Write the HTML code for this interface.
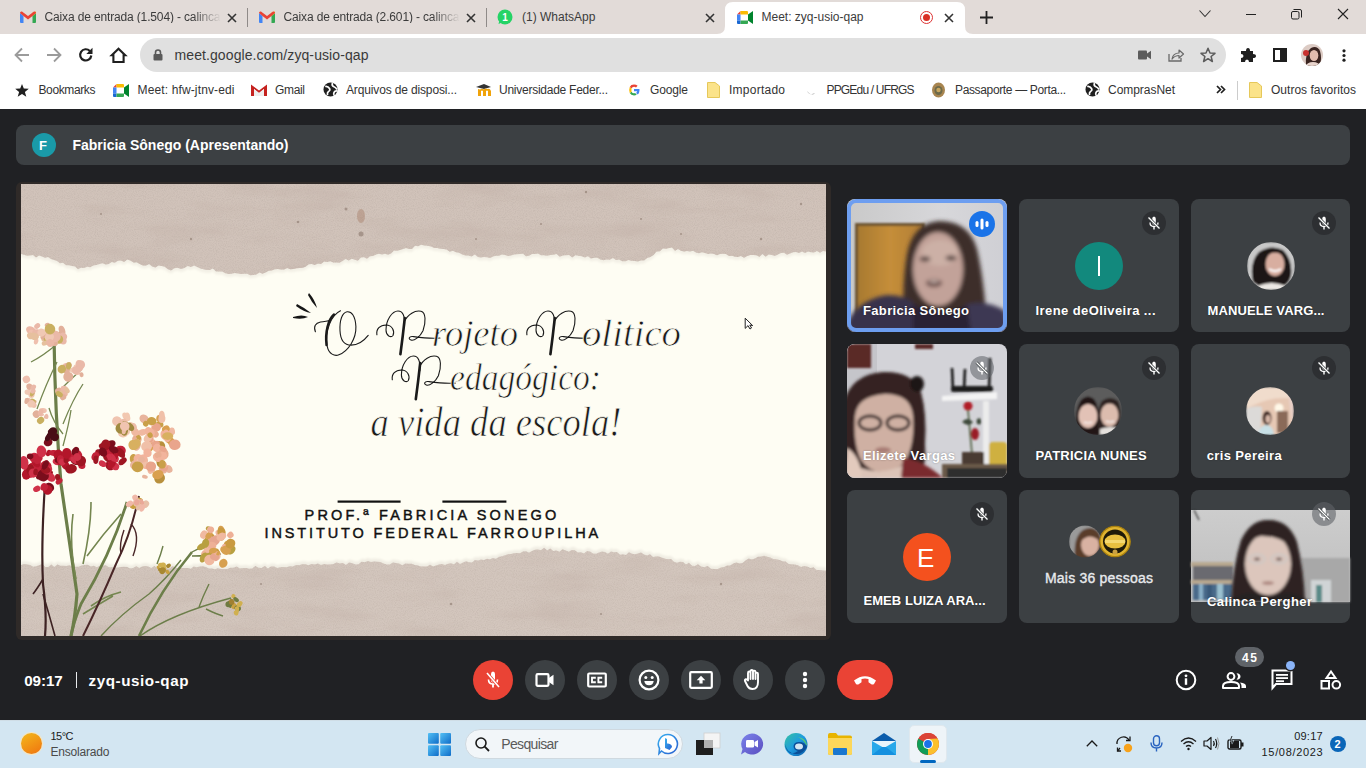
<!DOCTYPE html>
<html><head><meta charset="utf-8">
<style>
*{margin:0;padding:0;box-sizing:border-box}
html,body{width:1366px;height:768px;overflow:hidden;background:#202124;font-family:"Liberation Sans",sans-serif;position:relative}
.a{position:absolute}
.t{position:absolute;white-space:nowrap}
svg{position:absolute;overflow:visible}
</style></head><body>
<div class="a" style="left:0;top:0;width:1366px;height:34px;background:#e2dbd8"></div>
<svg style="left:0;top:0" width="1366" height="34"><path d="M717,34 Q725,34 725,26 L725,10 Q725,2 733,2 L957,2 Q965,2 965,10 L965,26 Q965,34 973,34 Z" fill="#fff"/></svg>
<div class="a" style="left:247px;top:8px;width:1px;height:19px;background:#8f8a88"></div>
<div class="a" style="left:486px;top:8px;width:1px;height:19px;background:#8f8a88"></div>
<svg style="left:20px;top:11px" width="16" height="12" viewBox="0 0 16 12">
<path d="M0,2 L0,11 Q0,12 1,12 L3.5,12 L3.5,5 Z" fill="#4285f4"/>
<path d="M16,2 L16,11 Q16,12 15,12 L12.5,12 L12.5,5 Z" fill="#34a853"/>
<path d="M12.5,1.5 L16,0.5 L16,2 L12.5,5 Z" fill="#fbbc04"/>
<path d="M0,2 Q0,0 2,0.5 L8,5 L14,0.5 Q16,0 16,2 L12.5,5 L8,8.5 L3.5,5 Z" fill="#ea4335"/>
</svg>
<div class="t" style="left:44.50px;top:10.80px;font-size:12px;font-weight:normal;font-family:'Liberation Sans', sans-serif;line-height:12px;color:#3b3b3b;letter-spacing:-0.145px;width:176px;overflow:hidden;-webkit-mask-image:linear-gradient(90deg,#000 84%,transparent 100%);">Caixa de entrada (1.504) - calinca</div>
<svg style="left:259px;top:11px" width="16" height="12" viewBox="0 0 16 12">
<path d="M0,2 L0,11 Q0,12 1,12 L3.5,12 L3.5,5 Z" fill="#4285f4"/>
<path d="M16,2 L16,11 Q16,12 15,12 L12.5,12 L12.5,5 Z" fill="#34a853"/>
<path d="M12.5,1.5 L16,0.5 L16,2 L12.5,5 Z" fill="#fbbc04"/>
<path d="M0,2 Q0,0 2,0.5 L8,5 L14,0.5 Q16,0 16,2 L12.5,5 L8,8.5 L3.5,5 Z" fill="#ea4335"/>
</svg>
<div class="t" style="left:283.50px;top:10.80px;font-size:12px;font-weight:normal;font-family:'Liberation Sans', sans-serif;line-height:12px;color:#3b3b3b;letter-spacing:-0.145px;width:176px;overflow:hidden;-webkit-mask-image:linear-gradient(90deg,#000 84%,transparent 100%);">Caixa de entrada (2.601) - calinca</div>
<svg style="left:228.0px;top:13.5px" width="8" height="8"><path d="M0,0 L8,8 M8,0 L0,8" stroke="#333" stroke-width="1.6"/></svg>
<svg style="left:467.0px;top:13.5px" width="8" height="8"><path d="M0,0 L8,8 M8,0 L0,8" stroke="#333" stroke-width="1.6"/></svg>
<svg style="left:706.0px;top:13.5px" width="8" height="8"><path d="M0,0 L8,8 M8,0 L0,8" stroke="#333" stroke-width="1.6"/></svg>
<svg style="left:945.0px;top:13.5px" width="8" height="8"><path d="M0,0 L8,8 M8,0 L0,8" stroke="#333" stroke-width="1.6"/></svg>
<svg style="left:497px;top:9px" width="16" height="16" viewBox="0 0 16 16"><circle cx="8" cy="8" r="7.5" fill="#25d366"/><path d="M1.5,15 L2.5,11 L5,13.5 Z" fill="#25d366"/><text x="8" y="11.8" font-size="10" font-family="Liberation Sans" font-weight="bold" fill="#fff" text-anchor="middle">1</text></svg>
<div class="t" style="left:522.00px;top:10.80px;font-size:12px;font-weight:normal;font-family:'Liberation Sans', sans-serif;line-height:12px;color:#3b3b3b;">(1) WhatsApp</div>
<svg style="left:737px;top:11px" width="16" height="13" viewBox="0 0 16 13">
<path d="M0,3.5 L3.5,0 L3.5,3.5 Z" fill="#ea4335"/>
<path d="M3.5,0 L10,0 Q11,0 11,1 L11,3.5 L3.5,3.5 Z" fill="#fbbc04"/>
<path d="M0,3.5 L3.5,3.5 L3.5,9.5 L0,9.5 Z" fill="#4285f4"/>
<path d="M0,9.5 L3.5,9.5 L3.5,13 L1,13 Q0,13 0,12 Z" fill="#1967d2"/>
<path d="M3.5,9.5 L11,9.5 L11,12 Q11,13 10,13 L3.5,13 Z" fill="#34a853"/>
<path d="M11,3.5 L11,9.5 L16,13 L16,0 Z" fill="#00832d"/>
<path d="M7.5,4.5 L11,4.5 L11,8.5 L7.5,8.5 Z" fill="#fff"/>
</svg>
<div class="t" style="left:761.50px;top:10.80px;font-size:12px;font-weight:normal;font-family:'Liberation Sans', sans-serif;line-height:12px;color:#3b3b3b;">Meet: zyq-usio-qap</div>
<div class="a" style="left:920px;top:11px;width:13px;height:13px;border-radius:50%;background:#fff;border:1.5px solid #d33;"></div>
<div class="a" style="left:923px;top:14px;width:7px;height:7px;border-radius:50%;background:#d93025"></div>
<svg style="left:980px;top:11px" width="13" height="13"><path d="M6.5,0 L6.5,13 M0,6.5 L13,6.5" stroke="#222" stroke-width="1.8"/></svg>
<svg style="left:1199px;top:10px" width="12" height="8"><path d="M0.5,0.5 L6,6.5 L11.5,0.5" stroke="#333" stroke-width="1.1" fill="none"/></svg>
<div class="a" style="left:1246px;top:14px;width:10px;height:1px;background:#222"></div>
<svg style="left:1291px;top:9px" width="12" height="11"><rect x="0.5" y="2.5" width="7.5" height="7.5" rx="1.5" stroke="#222" fill="none" stroke-width="1"/><path d="M2.5,0.5 L9,0.5 Q10.5,0.5 10.5,2 L10.5,8.5" stroke="#222" fill="none" stroke-width="1"/></svg>
<svg style="left:1338.0px;top:9.0px" width="10" height="10"><path d="M0,0 L10,10 M10,0 L0,10" stroke="#222" stroke-width="1.1"/></svg>
<div class="a" style="left:0;top:34px;width:1366px;height:41px;background:#fff"></div>
<svg style="left:14px;top:47px" width="16" height="16"><path d="M15,8 L2,8 M8,1.5 L1.5,8 L8,14.5" stroke="#9b9b9b" stroke-width="1.8" fill="none"/></svg>
<svg style="left:46px;top:47px" width="16" height="16"><path d="M1,8 L14,8 M8,1.5 L14.5,8 L8,14.5" stroke="#9b9b9b" stroke-width="1.8" fill="none"/></svg>
<svg style="left:78px;top:47px" width="16" height="16"><path d="M13.3,8.5 A5.6,5.6 0 1 1 11.8,4" stroke="#1f1f1f" stroke-width="2.2" fill="none"/><path d="M14.5,0.8 L14.5,7 L8.3,7 Z" fill="#1f1f1f"/></svg>
<svg style="left:110px;top:47px" width="17" height="16"><path d="M8.5,1.8 L1.8,8.3 L3.4,8.3 L3.4,15 L13.6,15 L13.6,8.3 L15.2,8.3 Z" stroke="#1f1f1f" stroke-width="2.1" fill="none" stroke-linejoin="miter"/></svg>
<div class="a" style="left:140px;top:38px;width:1086px;height:34px;border-radius:17px;background:#e0e0e0"></div>
<svg style="left:153px;top:49px" width="10" height="12"><path d="M2.5,5 L2.5,3.5 A2.5,2.5 0 0 1 7.5,3.5 L7.5,5" stroke="#5a5a5a" stroke-width="1.6" fill="none"/><rect x="0.5" y="5" width="9" height="6.5" rx="1" fill="#5a5a5a"/></svg>
<div class="t" style="left:174.50px;top:48.10px;font-size:14px;font-weight:normal;font-family:'Liberation Sans', sans-serif;line-height:14px;color:#3a3a3a;letter-spacing:0.095px;">meet.google.com/zyq-usio-qap</div>
<svg style="left:1138px;top:50px" width="13" height="10"><rect x="0" y="0.5" width="9" height="9" rx="1" fill="#5c5c5c"/><path d="M9,3.5 L13,0.8 L13,9.2 L9,6.5 Z" fill="#5c5c5c"/></svg>
<svg style="left:1168px;top:48px" width="16" height="14"><path d="M1,6 L1,13 L13,13 L13,10" stroke="#6a6a6a" stroke-width="1.3" fill="none"/><path d="M4,11 Q5,5 11,5 L11,2 L15.5,6 L11,10 L11,7.5 Q7,7.5 4,11 Z" stroke="#6a6a6a" stroke-width="1.2" fill="none" stroke-linejoin="round"/></svg>
<svg style="left:1200px;top:47px" width="16" height="16" viewBox="0 0 16 16"><path d="M8,1.2 L10,6 L15,6.3 L11.1,9.5 L12.4,14.5 L8,11.7 L3.6,14.5 L4.9,9.5 L1,6.3 L6,6 Z" stroke="#5c5c5c" stroke-width="1.5" fill="none" stroke-linejoin="round"/></svg>
<svg style="left:1240px;top:47px" width="16" height="16" viewBox="0 0 16 16"><path d="M3,4 L6,4 Q6,1 8,1 Q10,1 10,4 L13,4 L13,7 Q16,7 16,9 Q16,11 13,11 L13,15 L9,15 Q9,12.5 7,12.5 Q5,12.5 5,15 L1,15 L1,11 Q3.5,11 3.5,9 Q3.5,7 1,7 L1,4 Z" fill="#1f1f1f"/></svg>
<svg style="left:1273px;top:48px" width="14" height="14"><rect x="1" y="1" width="12" height="12" stroke="#1f1f1f" stroke-width="2" fill="none"/><rect x="7" y="1" width="6" height="12" fill="#1f1f1f"/></svg>
<svg style="left:1301px;top:44px" width="22" height="22" viewBox="0 0 22 22"><defs><clipPath id="pc"><circle cx="11" cy="11" r="11"/></clipPath></defs>
<g clip-path="url(#pc)"><rect width="22" height="22" fill="#dccbc4"/><path d="M5,22 Q4,8 10,4 Q16,1 19,7 Q21,14 19,22 Z" fill="#3a2420"/><ellipse cx="13" cy="11.5" rx="4.3" ry="5.5" fill="#e2bcae"/><circle cx="5" cy="9" r="3" fill="#c8302e"/><ellipse cx="12" cy="22" rx="7" ry="4" fill="#e8d4cc"/></g></svg>
<svg style="left:1341px;top:49px" width="6" height="13"><circle cx="3" cy="1.8" r="1.6" fill="#1f1f1f"/><circle cx="3" cy="6.5" r="1.6" fill="#1f1f1f"/><circle cx="3" cy="11.2" r="1.6" fill="#1f1f1f"/></svg>
<div class="a" style="left:0;top:75px;width:1366px;height:34px;background:#fff"></div>
<svg style="left:15px;top:84px" width="14" height="13" viewBox="0 0 14 13"><path d="M7,0 L8.8,4.6 L13.8,4.8 L9.9,7.9 L11.3,12.8 L7,10 L2.7,12.8 L4.1,7.9 L0.2,4.8 L5.2,4.6 Z" fill="#1f1f1f"/></svg>
<div class="t" style="left:38.50px;top:83.80px;font-size:12px;font-weight:normal;font-family:'Liberation Sans', sans-serif;line-height:12px;color:#333;letter-spacing:-0.379px;">Bookmarks</div>
<svg style="left:113px;top:83.5px" width="16" height="13" viewBox="0 0 16 13">
<path d="M0,3.5 L3.5,0 L3.5,3.5 Z" fill="#ea4335"/>
<path d="M3.5,0 L10,0 Q11,0 11,1 L11,3.5 L3.5,3.5 Z" fill="#fbbc04"/>
<path d="M0,3.5 L3.5,3.5 L3.5,9.5 L0,9.5 Z" fill="#4285f4"/>
<path d="M0,9.5 L3.5,9.5 L3.5,13 L1,13 Q0,13 0,12 Z" fill="#1967d2"/>
<path d="M3.5,9.5 L11,9.5 L11,12 Q11,13 10,13 L3.5,13 Z" fill="#34a853"/>
<path d="M11,3.5 L11,9.5 L16,13 L16,0 Z" fill="#00832d"/>
<path d="M7.5,4.5 L11,4.5 L11,8.5 L7.5,8.5 Z" fill="#fff"/>
</svg>
<div class="t" style="left:137.50px;top:83.80px;font-size:12px;font-weight:normal;font-family:'Liberation Sans', sans-serif;line-height:12px;color:#333;letter-spacing:0.135px;">Meet: hfw-jtnv-edi</div>
<svg style="left:251px;top:84px" width="16" height="12" viewBox="0 0 16 12"><path d="M0,0.5 L8,6.5 L16,0.5 L16,12 L13,12 L13,5 L8,9 L3,5 L3,12 L0,12 Z" fill="#c5221f"/><path d="M3,5 L8,9 L13,5 L13,12 L3,12 Z" fill="#eee"/></svg>
<div class="t" style="left:275.00px;top:83.80px;font-size:12px;font-weight:normal;font-family:'Liberation Sans', sans-serif;line-height:12px;color:#333;letter-spacing:-0.336px;">Gmail</div>
<svg style="left:323px;top:82px" width="15" height="15" viewBox="0 0 15 15"><circle cx="7.5" cy="7.5" r="7" fill="#1f1f1f"/><path d="M2.2,4.5 Q5,4 6.5,6.5 Q7.5,8.5 5.5,9.5 Q4,10.5 4.5,13.2 M9.5,1 Q8.5,3.5 10.5,4.5 Q13,5.5 14,7.5 M14.3,9 Q12,8.5 11,10.5 Q10,12.5 11.5,14" stroke="#fff" stroke-width="1.7" fill="none"/></svg>
<div class="t" style="left:346.00px;top:83.80px;font-size:12px;font-weight:normal;font-family:'Liberation Sans', sans-serif;line-height:12px;color:#333;letter-spacing:-0.146px;">Arquivos de disposi...</div>
<svg style="left:475px;top:83px" width="17" height="14" viewBox="0 0 17 14"><path d="M1,4 L9,1 L16,4 L9,6 Z" fill="#333"/><path d="M3,6 L3,13 L6,13 L6,8 Q7,7 8,8 L8,13 L11,13 L11,8 Q12,7 13,8 L13,13 L16,13 L16,8 Q15,5 12,6 Q10,5 9,6.5 Q7,5 5,6.5 Z" fill="#f0a30a"/></svg>
<div class="t" style="left:499.00px;top:83.80px;font-size:12px;font-weight:normal;font-family:'Liberation Sans', sans-serif;line-height:12px;color:#333;letter-spacing:-0.253px;">Universidade Feder...</div>
<svg style="left:628px;top:84px" width="12" height="12" viewBox="0 0 24 24"><path d="M23,12.3 Q23,11.2 22.8,10 L12,10 L12,14.5 L18.3,14.5 Q17.9,16.7 16,18 L19.6,20.8 Q23,17.7 23,12.3 Z" fill="#4285f4"/><path d="M12,23 Q15.2,23 17.5,20.8 L14,18 Q13,18.7 12,18.7 Q8.5,18.7 7.2,15.3 L3.5,18.1 Q5.8,23 12,23 Z" fill="#34a853"/><path d="M7.2,15.3 Q6.5,13.7 7.2,8.7 L3.5,5.9 Q1.5,10 3.5,18.1 Z" fill="#fbbc05"/><path d="M12,5.3 Q14.3,5.3 16,6.8 L19.2,3.6 Q16.3,1 12,1 Q5.8,1 3.5,5.9 L7.2,8.7 Q8.5,5.3 12,5.3 Z" fill="#ea4335"/></svg>
<div class="t" style="left:650.00px;top:83.80px;font-size:12px;font-weight:normal;font-family:'Liberation Sans', sans-serif;line-height:12px;color:#333;letter-spacing:-0.141px;">Google</div>
<svg style="left:707px;top:82px" width="13" height="16"><path d="M0.5,0.5 L8,0.5 L12.5,4 L12.5,15.5 L0.5,15.5 Z" fill="#fbe38a" stroke="#e6c85a" stroke-width="1"/></svg>
<div class="t" style="left:729.00px;top:83.80px;font-size:12px;font-weight:normal;font-family:'Liberation Sans', sans-serif;line-height:12px;color:#333;letter-spacing:0.246px;">Importado</div>
<svg style="left:806px;top:88px" width="10" height="8"><path d="M1,3 Q3,8 9,5 Q6,9 1,3" fill="#aaa"/></svg>
<div class="t" style="left:826.50px;top:83.80px;font-size:12px;font-weight:normal;font-family:'Liberation Sans', sans-serif;line-height:12px;color:#333;letter-spacing:-0.823px;">PPGEdu / UFRGS</div>
<svg style="left:931px;top:82px" width="15" height="16" viewBox="0 0 15 16"><ellipse cx="7.5" cy="8" rx="6.5" ry="7.5" fill="#a88550"/><ellipse cx="7.5" cy="8.5" rx="4" ry="4.5" fill="#6d6a4a"/><circle cx="7.5" cy="8" r="2.2" fill="#c9a65e"/></svg>
<div class="t" style="left:955.00px;top:83.80px;font-size:12px;font-weight:normal;font-family:'Liberation Sans', sans-serif;line-height:12px;color:#333;letter-spacing:-0.353px;">Passaporte — Porta...</div>
<svg style="left:1085px;top:82px" width="15" height="15" viewBox="0 0 15 15"><circle cx="7.5" cy="7.5" r="7" fill="#1f1f1f"/><path d="M2.2,4.5 Q5,4 6.5,6.5 Q7.5,8.5 5.5,9.5 Q4,10.5 4.5,13.2 M9.5,1 Q8.5,3.5 10.5,4.5 Q13,5.5 14,7.5 M14.3,9 Q12,8.5 11,10.5 Q10,12.5 11.5,14" stroke="#fff" stroke-width="1.7" fill="none"/></svg>
<div class="t" style="left:1108.00px;top:83.80px;font-size:12px;font-weight:normal;font-family:'Liberation Sans', sans-serif;line-height:12px;color:#333;letter-spacing:-0.040px;">ComprasNet</div>
<svg style="left:1216px;top:85px" width="10" height="9"><path d="M1,1 L4.5,4.5 L1,8 M5,1 L8.5,4.5 L5,8" stroke="#1f1f1f" stroke-width="1.7" fill="none"/></svg>
<div class="a" style="left:1237px;top:81px;width:1px;height:19px;background:#ccc"></div>
<svg style="left:1249px;top:82px" width="13" height="16"><path d="M0.5,0.5 L8,0.5 L12.5,4 L12.5,15.5 L0.5,15.5 Z" fill="#fbe38a" stroke="#e6c85a" stroke-width="1"/></svg>
<div class="t" style="left:1271.00px;top:83.80px;font-size:12px;font-weight:normal;font-family:'Liberation Sans', sans-serif;line-height:12px;color:#333;letter-spacing:0.020px;">Outros favoritos</div>
<div class="a" style="left:0;top:109px;width:1366px;height:611px;background:#202124"></div>
<div class="a" style="left:16px;top:125px;width:1334px;height:40px;border-radius:8px;background:#3c4043"></div>
<div class="a" style="left:32px;top:133px;width:24px;height:24px;border-radius:50%;background:#1a9aa8"></div>
<div class="t" style="left:39.00px;top:138.95px;font-size:13px;font-weight:bold;font-family:'Liberation Sans', sans-serif;line-height:13px;color:#fff;">F</div>
<div class="t" style="left:72.50px;top:137.60px;font-size:14px;font-weight:bold;font-family:'Liberation Sans', sans-serif;line-height:14px;color:#fff;letter-spacing:-0.009px;">Fabricia Sônego (Apresentando)</div>
<div class="a" style="left:16px;top:182px;width:815px;height:458px;border-radius:6px;background:#2f2a28"></div>
<div id="slide" class="a" style="left:21px;top:184px;width:805px;height:452px;overflow:hidden;background:#fdfcf1"></div>
<svg style="left:21px;top:184px;overflow:hidden" width="805" height="452" viewBox="0 0 805 452">
<defs>
<filter id="noise" x="0" y="0" width="100%" height="100%"><feTurbulence type="fractalNoise" baseFrequency="0.9" numOctaves="2" seed="3" result="n"/><feColorMatrix in="n" type="matrix" values="0 0 0 0 0.45  0 0 0 0 0.38  0 0 0 0 0.34  0 0 0 -1.3 0.8" result="c"/><feComposite in="c" in2="SourceGraphic" operator="in"/></filter>
<filter id="mottle" x="0" y="0" width="100%" height="100%"><feTurbulence type="fractalNoise" baseFrequency="0.012 0.05" numOctaves="4" seed="9" result="n"/><feColorMatrix in="n" type="matrix" values="0 0 0 0 0.55  0 0 0 0 0.45  0 0 0 0 0.40  0 0 0 2.2 -1.0" result="c"/><feComposite in="c" in2="SourceGraphic" operator="in"/></filter>
<filter id="soft" x="-5%" y="-5%" width="110%" height="110%"><feGaussianBlur stdDeviation="1.2"/></filter>
<filter id="fl" x="-10%" y="-10%" width="120%" height="120%"><feGaussianBlur stdDeviation="0.6"/></filter>
</defs>
<rect width="805" height="452" fill="#fefdf3"/>
<g filter="url(#soft)"><path d="M0,0 L805,0 L805,68 L805.0,67.4 L802.0,67.0 L799.0,68.7 L796.0,67.0 L793.0,68.6 L790.0,68.2 L787.0,67.4 L784.0,69.0 L781.0,67.6 L778.0,69.0 L775.0,68.0 L772.0,68.2 L769.0,69.4 L766.0,70.8 L763.0,68.7 L760.0,69.1 L756.9,70.6 L753.8,71.9 L750.8,70.9 L747.7,70.6 L744.6,72.7 L741.5,69.9 L738.5,72.8 L735.4,71.2 L732.3,70.9 L729.2,71.1 L726.2,71.9 L723.1,73.8 L720.0,72.0 L717.0,73.0 L714.0,72.8 L711.0,71.7 L708.0,72.0 L705.0,70.1 L702.0,69.8 L699.0,70.0 L696.0,71.2 L693.0,70.1 L690.0,69.4 L687.0,69.9 L684.0,69.1 L681.0,68.2 L678.0,69.3 L675.0,68.6 L672.0,66.8 L669.0,67.4 L666.0,66.9 L663.0,67.6 L660.0,66.7 L657.0,64.9 L654.0,66.7 L651.0,63.6 L648.0,64.1 L645.0,64.8 L641.9,64.5 L638.8,67.2 L635.6,67.4 L632.5,71.0 L629.4,73.0 L626.2,74.0 L623.1,76.6 L620.0,76.4 L616.9,77.4 L613.8,76.9 L610.6,76.7 L607.5,76.1 L604.4,77.2 L601.2,77.3 L598.1,75.6 L595.0,76.0 L591.9,73.9 L588.8,75.8 L585.6,75.4 L582.5,76.3 L579.4,75.6 L576.2,73.7 L573.1,73.8 L570.0,74.5 L566.9,72.2 L563.8,73.4 L560.6,72.2 L557.5,71.8 L554.4,71.3 L551.2,73.4 L548.1,71.1 L545.0,71.2 L541.9,71.4 L538.8,72.7 L535.6,69.9 L532.5,70.8 L529.4,70.9 L526.2,71.7 L523.1,71.3 L520.0,71.2 L517.0,69.4 L514.0,70.0 L511.0,70.0 L508.0,71.8 L505.0,72.2 L502.0,69.8 L499.0,70.0 L496.0,70.3 L493.0,70.5 L490.0,71.5 L487.0,71.9 L484.0,71.0 L481.0,70.4 L478.0,71.8 L475.0,71.8 L472.0,72.6 L469.0,74.0 L466.0,73.3 L463.0,72.9 L460.0,73.4 L456.9,73.0 L453.8,70.4 L450.6,72.6 L447.5,71.6 L444.4,71.4 L441.2,70.6 L438.1,68.7 L435.0,68.2 L431.9,66.7 L428.8,67.8 L425.6,65.4 L422.5,64.9 L419.4,64.8 L416.2,64.0 L413.1,64.1 L410.0,62.6 L406.7,61.7 L403.3,61.6 L400.0,60.7 L397.0,62.2 L394.0,61.8 L391.0,65.1 L388.0,65.0 L385.0,64.1 L382.0,65.1 L379.0,66.1 L376.0,66.8 L373.0,66.6 L370.0,69.6 L367.0,70.7 L364.0,69.7 L361.0,70.4 L358.0,69.8 L355.0,70.5 L352.0,71.9 L349.0,72.3 L346.0,74.8 L343.0,73.3 L340.0,73.5 L336.9,76.8 L333.8,75.7 L330.8,74.8 L327.7,76.4 L324.6,75.0 L321.5,76.9 L318.5,78.7 L315.4,78.6 L312.3,78.4 L309.2,77.3 L306.2,78.0 L303.1,77.6 L300.0,79.9 L296.9,79.6 L293.8,81.0 L290.8,80.1 L287.7,80.3 L284.6,82.7 L281.5,83.8 L278.5,83.9 L275.4,84.3 L272.3,84.9 L269.2,85.2 L266.2,84.0 L263.1,85.5 L260.0,85.5 L256.9,84.9 L253.8,85.3 L250.8,86.4 L247.7,86.8 L244.6,88.5 L241.5,89.8 L238.5,88.5 L235.4,90.5 L232.3,91.0 L229.2,91.3 L226.2,89.8 L223.1,89.7 L220.0,90.1 L216.9,89.5 L213.8,88.9 L210.6,89.7 L207.5,90.0 L204.4,89.3 L201.2,87.6 L198.1,87.6 L195.0,87.5 L191.9,84.6 L188.8,85.9 L185.6,86.1 L182.5,85.2 L179.4,84.5 L176.2,83.1 L173.1,81.5 L170.0,82.9 L166.7,82.0 L163.3,84.0 L160.0,85.0 L156.7,83.7 L153.3,84.2 L150.0,86.4 L146.9,85.2 L143.8,82.8 L140.6,82.1 L137.5,81.6 L134.4,83.5 L131.2,82.6 L128.1,79.9 L125.0,81.5 L121.9,81.5 L118.8,79.9 L115.6,78.3 L112.5,78.4 L109.4,76.5 L106.2,75.6 L103.1,78.1 L100.0,76.5 L96.9,76.8 L93.8,78.8 L90.8,77.9 L87.7,80.0 L84.6,80.5 L81.5,79.2 L78.5,80.1 L75.4,80.9 L72.3,81.4 L69.2,83.2 L66.2,82.8 L63.1,84.0 L60.0,83.8 L57.0,85.3 L54.0,82.5 L51.0,81.9 L48.0,81.3 L45.0,81.3 L42.0,78.7 L39.0,79.3 L36.0,77.0 L33.0,76.1 L30.0,75.1 L27.0,73.0 L24.0,73.8 L21.0,72.5 L18.0,71.4 L15.0,73.5 L12.0,71.0 L9.0,71.4 L6.0,71.7 L3.0,70.7 L0.0,70.0 Z" fill="#f3f0e6" transform="translate(0,3)"/></g>
<path d="M0,0 L805,0 L805,68 L805.0,67.4 L802.0,67.0 L799.0,68.7 L796.0,67.0 L793.0,68.6 L790.0,68.2 L787.0,67.4 L784.0,69.0 L781.0,67.6 L778.0,69.0 L775.0,68.0 L772.0,68.2 L769.0,69.4 L766.0,70.8 L763.0,68.7 L760.0,69.1 L756.9,70.6 L753.8,71.9 L750.8,70.9 L747.7,70.6 L744.6,72.7 L741.5,69.9 L738.5,72.8 L735.4,71.2 L732.3,70.9 L729.2,71.1 L726.2,71.9 L723.1,73.8 L720.0,72.0 L717.0,73.0 L714.0,72.8 L711.0,71.7 L708.0,72.0 L705.0,70.1 L702.0,69.8 L699.0,70.0 L696.0,71.2 L693.0,70.1 L690.0,69.4 L687.0,69.9 L684.0,69.1 L681.0,68.2 L678.0,69.3 L675.0,68.6 L672.0,66.8 L669.0,67.4 L666.0,66.9 L663.0,67.6 L660.0,66.7 L657.0,64.9 L654.0,66.7 L651.0,63.6 L648.0,64.1 L645.0,64.8 L641.9,64.5 L638.8,67.2 L635.6,67.4 L632.5,71.0 L629.4,73.0 L626.2,74.0 L623.1,76.6 L620.0,76.4 L616.9,77.4 L613.8,76.9 L610.6,76.7 L607.5,76.1 L604.4,77.2 L601.2,77.3 L598.1,75.6 L595.0,76.0 L591.9,73.9 L588.8,75.8 L585.6,75.4 L582.5,76.3 L579.4,75.6 L576.2,73.7 L573.1,73.8 L570.0,74.5 L566.9,72.2 L563.8,73.4 L560.6,72.2 L557.5,71.8 L554.4,71.3 L551.2,73.4 L548.1,71.1 L545.0,71.2 L541.9,71.4 L538.8,72.7 L535.6,69.9 L532.5,70.8 L529.4,70.9 L526.2,71.7 L523.1,71.3 L520.0,71.2 L517.0,69.4 L514.0,70.0 L511.0,70.0 L508.0,71.8 L505.0,72.2 L502.0,69.8 L499.0,70.0 L496.0,70.3 L493.0,70.5 L490.0,71.5 L487.0,71.9 L484.0,71.0 L481.0,70.4 L478.0,71.8 L475.0,71.8 L472.0,72.6 L469.0,74.0 L466.0,73.3 L463.0,72.9 L460.0,73.4 L456.9,73.0 L453.8,70.4 L450.6,72.6 L447.5,71.6 L444.4,71.4 L441.2,70.6 L438.1,68.7 L435.0,68.2 L431.9,66.7 L428.8,67.8 L425.6,65.4 L422.5,64.9 L419.4,64.8 L416.2,64.0 L413.1,64.1 L410.0,62.6 L406.7,61.7 L403.3,61.6 L400.0,60.7 L397.0,62.2 L394.0,61.8 L391.0,65.1 L388.0,65.0 L385.0,64.1 L382.0,65.1 L379.0,66.1 L376.0,66.8 L373.0,66.6 L370.0,69.6 L367.0,70.7 L364.0,69.7 L361.0,70.4 L358.0,69.8 L355.0,70.5 L352.0,71.9 L349.0,72.3 L346.0,74.8 L343.0,73.3 L340.0,73.5 L336.9,76.8 L333.8,75.7 L330.8,74.8 L327.7,76.4 L324.6,75.0 L321.5,76.9 L318.5,78.7 L315.4,78.6 L312.3,78.4 L309.2,77.3 L306.2,78.0 L303.1,77.6 L300.0,79.9 L296.9,79.6 L293.8,81.0 L290.8,80.1 L287.7,80.3 L284.6,82.7 L281.5,83.8 L278.5,83.9 L275.4,84.3 L272.3,84.9 L269.2,85.2 L266.2,84.0 L263.1,85.5 L260.0,85.5 L256.9,84.9 L253.8,85.3 L250.8,86.4 L247.7,86.8 L244.6,88.5 L241.5,89.8 L238.5,88.5 L235.4,90.5 L232.3,91.0 L229.2,91.3 L226.2,89.8 L223.1,89.7 L220.0,90.1 L216.9,89.5 L213.8,88.9 L210.6,89.7 L207.5,90.0 L204.4,89.3 L201.2,87.6 L198.1,87.6 L195.0,87.5 L191.9,84.6 L188.8,85.9 L185.6,86.1 L182.5,85.2 L179.4,84.5 L176.2,83.1 L173.1,81.5 L170.0,82.9 L166.7,82.0 L163.3,84.0 L160.0,85.0 L156.7,83.7 L153.3,84.2 L150.0,86.4 L146.9,85.2 L143.8,82.8 L140.6,82.1 L137.5,81.6 L134.4,83.5 L131.2,82.6 L128.1,79.9 L125.0,81.5 L121.9,81.5 L118.8,79.9 L115.6,78.3 L112.5,78.4 L109.4,76.5 L106.2,75.6 L103.1,78.1 L100.0,76.5 L96.9,76.8 L93.8,78.8 L90.8,77.9 L87.7,80.0 L84.6,80.5 L81.5,79.2 L78.5,80.1 L75.4,80.9 L72.3,81.4 L69.2,83.2 L66.2,82.8 L63.1,84.0 L60.0,83.8 L57.0,85.3 L54.0,82.5 L51.0,81.9 L48.0,81.3 L45.0,81.3 L42.0,78.7 L39.0,79.3 L36.0,77.0 L33.0,76.1 L30.0,75.1 L27.0,73.0 L24.0,73.8 L21.0,72.5 L18.0,71.4 L15.0,73.5 L12.0,71.0 L9.0,71.4 L6.0,71.7 L3.0,70.7 L0.0,70.0 Z" fill="#d1c3ba"/>
<path d="M0,0 L805,0 L805,68 L805.0,67.4 L802.0,67.0 L799.0,68.7 L796.0,67.0 L793.0,68.6 L790.0,68.2 L787.0,67.4 L784.0,69.0 L781.0,67.6 L778.0,69.0 L775.0,68.0 L772.0,68.2 L769.0,69.4 L766.0,70.8 L763.0,68.7 L760.0,69.1 L756.9,70.6 L753.8,71.9 L750.8,70.9 L747.7,70.6 L744.6,72.7 L741.5,69.9 L738.5,72.8 L735.4,71.2 L732.3,70.9 L729.2,71.1 L726.2,71.9 L723.1,73.8 L720.0,72.0 L717.0,73.0 L714.0,72.8 L711.0,71.7 L708.0,72.0 L705.0,70.1 L702.0,69.8 L699.0,70.0 L696.0,71.2 L693.0,70.1 L690.0,69.4 L687.0,69.9 L684.0,69.1 L681.0,68.2 L678.0,69.3 L675.0,68.6 L672.0,66.8 L669.0,67.4 L666.0,66.9 L663.0,67.6 L660.0,66.7 L657.0,64.9 L654.0,66.7 L651.0,63.6 L648.0,64.1 L645.0,64.8 L641.9,64.5 L638.8,67.2 L635.6,67.4 L632.5,71.0 L629.4,73.0 L626.2,74.0 L623.1,76.6 L620.0,76.4 L616.9,77.4 L613.8,76.9 L610.6,76.7 L607.5,76.1 L604.4,77.2 L601.2,77.3 L598.1,75.6 L595.0,76.0 L591.9,73.9 L588.8,75.8 L585.6,75.4 L582.5,76.3 L579.4,75.6 L576.2,73.7 L573.1,73.8 L570.0,74.5 L566.9,72.2 L563.8,73.4 L560.6,72.2 L557.5,71.8 L554.4,71.3 L551.2,73.4 L548.1,71.1 L545.0,71.2 L541.9,71.4 L538.8,72.7 L535.6,69.9 L532.5,70.8 L529.4,70.9 L526.2,71.7 L523.1,71.3 L520.0,71.2 L517.0,69.4 L514.0,70.0 L511.0,70.0 L508.0,71.8 L505.0,72.2 L502.0,69.8 L499.0,70.0 L496.0,70.3 L493.0,70.5 L490.0,71.5 L487.0,71.9 L484.0,71.0 L481.0,70.4 L478.0,71.8 L475.0,71.8 L472.0,72.6 L469.0,74.0 L466.0,73.3 L463.0,72.9 L460.0,73.4 L456.9,73.0 L453.8,70.4 L450.6,72.6 L447.5,71.6 L444.4,71.4 L441.2,70.6 L438.1,68.7 L435.0,68.2 L431.9,66.7 L428.8,67.8 L425.6,65.4 L422.5,64.9 L419.4,64.8 L416.2,64.0 L413.1,64.1 L410.0,62.6 L406.7,61.7 L403.3,61.6 L400.0,60.7 L397.0,62.2 L394.0,61.8 L391.0,65.1 L388.0,65.0 L385.0,64.1 L382.0,65.1 L379.0,66.1 L376.0,66.8 L373.0,66.6 L370.0,69.6 L367.0,70.7 L364.0,69.7 L361.0,70.4 L358.0,69.8 L355.0,70.5 L352.0,71.9 L349.0,72.3 L346.0,74.8 L343.0,73.3 L340.0,73.5 L336.9,76.8 L333.8,75.7 L330.8,74.8 L327.7,76.4 L324.6,75.0 L321.5,76.9 L318.5,78.7 L315.4,78.6 L312.3,78.4 L309.2,77.3 L306.2,78.0 L303.1,77.6 L300.0,79.9 L296.9,79.6 L293.8,81.0 L290.8,80.1 L287.7,80.3 L284.6,82.7 L281.5,83.8 L278.5,83.9 L275.4,84.3 L272.3,84.9 L269.2,85.2 L266.2,84.0 L263.1,85.5 L260.0,85.5 L256.9,84.9 L253.8,85.3 L250.8,86.4 L247.7,86.8 L244.6,88.5 L241.5,89.8 L238.5,88.5 L235.4,90.5 L232.3,91.0 L229.2,91.3 L226.2,89.8 L223.1,89.7 L220.0,90.1 L216.9,89.5 L213.8,88.9 L210.6,89.7 L207.5,90.0 L204.4,89.3 L201.2,87.6 L198.1,87.6 L195.0,87.5 L191.9,84.6 L188.8,85.9 L185.6,86.1 L182.5,85.2 L179.4,84.5 L176.2,83.1 L173.1,81.5 L170.0,82.9 L166.7,82.0 L163.3,84.0 L160.0,85.0 L156.7,83.7 L153.3,84.2 L150.0,86.4 L146.9,85.2 L143.8,82.8 L140.6,82.1 L137.5,81.6 L134.4,83.5 L131.2,82.6 L128.1,79.9 L125.0,81.5 L121.9,81.5 L118.8,79.9 L115.6,78.3 L112.5,78.4 L109.4,76.5 L106.2,75.6 L103.1,78.1 L100.0,76.5 L96.9,76.8 L93.8,78.8 L90.8,77.9 L87.7,80.0 L84.6,80.5 L81.5,79.2 L78.5,80.1 L75.4,80.9 L72.3,81.4 L69.2,83.2 L66.2,82.8 L63.1,84.0 L60.0,83.8 L57.0,85.3 L54.0,82.5 L51.0,81.9 L48.0,81.3 L45.0,81.3 L42.0,78.7 L39.0,79.3 L36.0,77.0 L33.0,76.1 L30.0,75.1 L27.0,73.0 L24.0,73.8 L21.0,72.5 L18.0,71.4 L15.0,73.5 L12.0,71.0 L9.0,71.4 L6.0,71.7 L3.0,70.7 L0.0,70.0 Z" fill="#fff" filter="url(#noise)" opacity="0.55"/>
<path d="M0,0 L805,0 L805,68 L805.0,67.4 L802.0,67.0 L799.0,68.7 L796.0,67.0 L793.0,68.6 L790.0,68.2 L787.0,67.4 L784.0,69.0 L781.0,67.6 L778.0,69.0 L775.0,68.0 L772.0,68.2 L769.0,69.4 L766.0,70.8 L763.0,68.7 L760.0,69.1 L756.9,70.6 L753.8,71.9 L750.8,70.9 L747.7,70.6 L744.6,72.7 L741.5,69.9 L738.5,72.8 L735.4,71.2 L732.3,70.9 L729.2,71.1 L726.2,71.9 L723.1,73.8 L720.0,72.0 L717.0,73.0 L714.0,72.8 L711.0,71.7 L708.0,72.0 L705.0,70.1 L702.0,69.8 L699.0,70.0 L696.0,71.2 L693.0,70.1 L690.0,69.4 L687.0,69.9 L684.0,69.1 L681.0,68.2 L678.0,69.3 L675.0,68.6 L672.0,66.8 L669.0,67.4 L666.0,66.9 L663.0,67.6 L660.0,66.7 L657.0,64.9 L654.0,66.7 L651.0,63.6 L648.0,64.1 L645.0,64.8 L641.9,64.5 L638.8,67.2 L635.6,67.4 L632.5,71.0 L629.4,73.0 L626.2,74.0 L623.1,76.6 L620.0,76.4 L616.9,77.4 L613.8,76.9 L610.6,76.7 L607.5,76.1 L604.4,77.2 L601.2,77.3 L598.1,75.6 L595.0,76.0 L591.9,73.9 L588.8,75.8 L585.6,75.4 L582.5,76.3 L579.4,75.6 L576.2,73.7 L573.1,73.8 L570.0,74.5 L566.9,72.2 L563.8,73.4 L560.6,72.2 L557.5,71.8 L554.4,71.3 L551.2,73.4 L548.1,71.1 L545.0,71.2 L541.9,71.4 L538.8,72.7 L535.6,69.9 L532.5,70.8 L529.4,70.9 L526.2,71.7 L523.1,71.3 L520.0,71.2 L517.0,69.4 L514.0,70.0 L511.0,70.0 L508.0,71.8 L505.0,72.2 L502.0,69.8 L499.0,70.0 L496.0,70.3 L493.0,70.5 L490.0,71.5 L487.0,71.9 L484.0,71.0 L481.0,70.4 L478.0,71.8 L475.0,71.8 L472.0,72.6 L469.0,74.0 L466.0,73.3 L463.0,72.9 L460.0,73.4 L456.9,73.0 L453.8,70.4 L450.6,72.6 L447.5,71.6 L444.4,71.4 L441.2,70.6 L438.1,68.7 L435.0,68.2 L431.9,66.7 L428.8,67.8 L425.6,65.4 L422.5,64.9 L419.4,64.8 L416.2,64.0 L413.1,64.1 L410.0,62.6 L406.7,61.7 L403.3,61.6 L400.0,60.7 L397.0,62.2 L394.0,61.8 L391.0,65.1 L388.0,65.0 L385.0,64.1 L382.0,65.1 L379.0,66.1 L376.0,66.8 L373.0,66.6 L370.0,69.6 L367.0,70.7 L364.0,69.7 L361.0,70.4 L358.0,69.8 L355.0,70.5 L352.0,71.9 L349.0,72.3 L346.0,74.8 L343.0,73.3 L340.0,73.5 L336.9,76.8 L333.8,75.7 L330.8,74.8 L327.7,76.4 L324.6,75.0 L321.5,76.9 L318.5,78.7 L315.4,78.6 L312.3,78.4 L309.2,77.3 L306.2,78.0 L303.1,77.6 L300.0,79.9 L296.9,79.6 L293.8,81.0 L290.8,80.1 L287.7,80.3 L284.6,82.7 L281.5,83.8 L278.5,83.9 L275.4,84.3 L272.3,84.9 L269.2,85.2 L266.2,84.0 L263.1,85.5 L260.0,85.5 L256.9,84.9 L253.8,85.3 L250.8,86.4 L247.7,86.8 L244.6,88.5 L241.5,89.8 L238.5,88.5 L235.4,90.5 L232.3,91.0 L229.2,91.3 L226.2,89.8 L223.1,89.7 L220.0,90.1 L216.9,89.5 L213.8,88.9 L210.6,89.7 L207.5,90.0 L204.4,89.3 L201.2,87.6 L198.1,87.6 L195.0,87.5 L191.9,84.6 L188.8,85.9 L185.6,86.1 L182.5,85.2 L179.4,84.5 L176.2,83.1 L173.1,81.5 L170.0,82.9 L166.7,82.0 L163.3,84.0 L160.0,85.0 L156.7,83.7 L153.3,84.2 L150.0,86.4 L146.9,85.2 L143.8,82.8 L140.6,82.1 L137.5,81.6 L134.4,83.5 L131.2,82.6 L128.1,79.9 L125.0,81.5 L121.9,81.5 L118.8,79.9 L115.6,78.3 L112.5,78.4 L109.4,76.5 L106.2,75.6 L103.1,78.1 L100.0,76.5 L96.9,76.8 L93.8,78.8 L90.8,77.9 L87.7,80.0 L84.6,80.5 L81.5,79.2 L78.5,80.1 L75.4,80.9 L72.3,81.4 L69.2,83.2 L66.2,82.8 L63.1,84.0 L60.0,83.8 L57.0,85.3 L54.0,82.5 L51.0,81.9 L48.0,81.3 L45.0,81.3 L42.0,78.7 L39.0,79.3 L36.0,77.0 L33.0,76.1 L30.0,75.1 L27.0,73.0 L24.0,73.8 L21.0,72.5 L18.0,71.4 L15.0,73.5 L12.0,71.0 L9.0,71.4 L6.0,71.7 L3.0,70.7 L0.0,70.0 Z" fill="#fff" filter="url(#mottle)" opacity="0.6"/>
<g filter="url(#soft)"><path d="M805,452 L805.0,386.4 L801.9,386.4 L798.8,385.9 L795.6,386.0 L792.5,383.2 L789.4,384.1 L786.2,382.4 L783.1,381.9 L780.0,382.9 L776.9,381.2 L773.8,380.5 L770.8,380.3 L767.7,379.9 L764.6,377.6 L761.5,377.3 L758.5,376.1 L755.4,375.3 L752.3,375.0 L749.2,373.4 L746.2,372.8 L743.1,371.8 L740.0,372.4 L736.9,372.7 L733.8,374.4 L730.8,375.6 L727.7,374.5 L724.6,376.6 L721.5,378.9 L718.5,379.6 L715.4,378.5 L712.3,379.5 L709.2,381.6 L706.2,381.5 L703.1,383.1 L700.0,383.6 L696.7,385.0 L693.3,384.9 L690.0,384.8 L686.7,381.9 L683.3,383.2 L680.0,382.5 L677.0,380.3 L674.0,382.0 L671.0,381.7 L668.0,378.7 L665.0,380.4 L662.0,378.1 L659.0,377.8 L656.0,378.8 L653.0,377.7 L650.0,374.9 L647.0,375.2 L644.0,374.8 L641.0,373.7 L638.0,372.6 L635.0,372.4 L632.0,373.1 L629.0,370.3 L626.0,371.4 L623.0,370.4 L620.0,368.5 L617.0,369.4 L614.0,370.2 L611.0,369.7 L608.0,368.2 L605.0,371.1 L602.0,370.3 L599.0,370.8 L596.0,367.9 L593.0,368.3 L590.0,367.5 L587.0,369.8 L584.0,368.1 L581.0,367.5 L578.0,368.4 L575.0,369.8 L572.0,369.4 L569.0,367.5 L566.0,367.1 L563.0,369.4 L560.0,368.2 L556.9,368.4 L553.8,366.2 L550.8,365.9 L547.7,367.7 L544.6,366.6 L541.5,365.2 L538.5,367.8 L535.4,366.6 L532.3,366.9 L529.2,364.4 L526.2,366.6 L523.1,363.8 L520.0,366.2 L517.0,365.5 L514.0,365.7 L511.0,367.0 L508.0,368.8 L505.0,367.3 L502.0,367.4 L499.0,369.3 L496.0,369.0 L493.0,369.2 L490.0,369.9 L487.0,370.2 L484.0,371.2 L481.0,372.2 L478.0,372.8 L475.0,374.8 L472.0,373.9 L469.0,375.2 L466.0,374.8 L463.0,375.9 L460.0,375.5 L457.0,376.5 L454.0,375.9 L451.0,378.5 L448.0,378.2 L445.0,377.3 L442.0,378.4 L439.0,380.1 L436.0,377.7 L433.0,380.3 L430.0,379.3 L427.0,379.7 L424.0,381.1 L421.0,379.9 L418.0,380.5 L415.0,381.4 L412.0,382.5 L409.0,380.7 L406.0,382.6 L403.0,382.4 L400.0,382.4 L396.9,381.4 L393.8,381.0 L390.6,379.8 L387.5,379.8 L384.4,379.4 L381.2,381.3 L378.1,379.5 L375.0,378.9 L371.9,378.4 L368.8,380.6 L365.6,380.4 L362.5,379.5 L359.4,378.1 L356.2,377.7 L353.1,377.6 L350.0,377.9 L346.9,377.1 L343.8,378.2 L340.6,377.8 L337.5,380.2 L334.4,380.4 L331.2,379.3 L328.1,378.5 L325.0,381.0 L321.9,379.1 L318.8,379.4 L315.6,378.5 L312.5,379.9 L309.4,380.4 L306.2,380.6 L303.1,379.9 L300.0,381.0 L296.9,379.5 L293.8,380.5 L290.6,380.1 L287.5,381.2 L284.4,380.2 L281.2,380.2 L278.1,381.2 L275.0,381.1 L271.9,382.4 L268.8,382.3 L265.6,383.2 L262.5,383.0 L259.4,383.3 L256.2,384.0 L253.1,382.5 L250.0,382.4 L246.9,384.6 L243.8,382.0 L240.6,383.9 L237.5,383.7 L234.4,381.9 L231.2,384.4 L228.1,384.7 L225.0,383.9 L221.9,384.3 L218.8,384.6 L215.6,382.5 L212.5,383.8 L209.4,383.8 L206.2,384.9 L203.1,384.9 L200.0,385.0 L197.0,384.2 L193.9,385.2 L190.9,384.5 L187.9,384.5 L184.8,383.0 L181.8,382.3 L178.8,382.6 L175.8,383.3 L172.7,382.5 L169.7,384.8 L166.7,383.9 L163.6,384.0 L160.6,384.0 L157.6,384.2 L154.5,383.5 L151.5,381.9 L148.5,384.4 L145.5,384.2 L142.4,383.4 L139.4,383.5 L136.4,383.9 L133.3,381.9 L130.3,384.1 L127.3,382.5 L124.2,381.9 L121.2,382.5 L118.2,383.9 L115.2,382.2 L112.1,383.9 L109.1,384.6 L106.1,383.0 L103.0,382.7 L100.0,382.9 L97.0,383.5 L93.9,383.7 L90.9,383.2 L87.9,383.2 L84.8,381.3 L81.8,381.5 L78.8,381.8 L75.8,383.3 L72.7,381.8 L69.7,382.6 L66.7,380.8 L63.6,380.9 L60.6,381.5 L57.6,382.7 L54.5,382.7 L51.5,382.6 L48.5,381.3 L45.5,382.0 L42.4,381.7 L39.4,381.7 L36.4,380.5 L33.3,382.9 L30.3,380.6 L27.3,383.1 L24.2,382.9 L21.2,379.9 L18.2,381.2 L15.2,382.3 L12.1,382.7 L9.1,381.0 L6.1,380.4 L3.0,380.1 L0.0,381.0 L0,452 Z" fill="#f0ede3" transform="translate(0,-3)"/></g>
<path d="M805,452 L805.0,386.4 L801.9,386.4 L798.8,385.9 L795.6,386.0 L792.5,383.2 L789.4,384.1 L786.2,382.4 L783.1,381.9 L780.0,382.9 L776.9,381.2 L773.8,380.5 L770.8,380.3 L767.7,379.9 L764.6,377.6 L761.5,377.3 L758.5,376.1 L755.4,375.3 L752.3,375.0 L749.2,373.4 L746.2,372.8 L743.1,371.8 L740.0,372.4 L736.9,372.7 L733.8,374.4 L730.8,375.6 L727.7,374.5 L724.6,376.6 L721.5,378.9 L718.5,379.6 L715.4,378.5 L712.3,379.5 L709.2,381.6 L706.2,381.5 L703.1,383.1 L700.0,383.6 L696.7,385.0 L693.3,384.9 L690.0,384.8 L686.7,381.9 L683.3,383.2 L680.0,382.5 L677.0,380.3 L674.0,382.0 L671.0,381.7 L668.0,378.7 L665.0,380.4 L662.0,378.1 L659.0,377.8 L656.0,378.8 L653.0,377.7 L650.0,374.9 L647.0,375.2 L644.0,374.8 L641.0,373.7 L638.0,372.6 L635.0,372.4 L632.0,373.1 L629.0,370.3 L626.0,371.4 L623.0,370.4 L620.0,368.5 L617.0,369.4 L614.0,370.2 L611.0,369.7 L608.0,368.2 L605.0,371.1 L602.0,370.3 L599.0,370.8 L596.0,367.9 L593.0,368.3 L590.0,367.5 L587.0,369.8 L584.0,368.1 L581.0,367.5 L578.0,368.4 L575.0,369.8 L572.0,369.4 L569.0,367.5 L566.0,367.1 L563.0,369.4 L560.0,368.2 L556.9,368.4 L553.8,366.2 L550.8,365.9 L547.7,367.7 L544.6,366.6 L541.5,365.2 L538.5,367.8 L535.4,366.6 L532.3,366.9 L529.2,364.4 L526.2,366.6 L523.1,363.8 L520.0,366.2 L517.0,365.5 L514.0,365.7 L511.0,367.0 L508.0,368.8 L505.0,367.3 L502.0,367.4 L499.0,369.3 L496.0,369.0 L493.0,369.2 L490.0,369.9 L487.0,370.2 L484.0,371.2 L481.0,372.2 L478.0,372.8 L475.0,374.8 L472.0,373.9 L469.0,375.2 L466.0,374.8 L463.0,375.9 L460.0,375.5 L457.0,376.5 L454.0,375.9 L451.0,378.5 L448.0,378.2 L445.0,377.3 L442.0,378.4 L439.0,380.1 L436.0,377.7 L433.0,380.3 L430.0,379.3 L427.0,379.7 L424.0,381.1 L421.0,379.9 L418.0,380.5 L415.0,381.4 L412.0,382.5 L409.0,380.7 L406.0,382.6 L403.0,382.4 L400.0,382.4 L396.9,381.4 L393.8,381.0 L390.6,379.8 L387.5,379.8 L384.4,379.4 L381.2,381.3 L378.1,379.5 L375.0,378.9 L371.9,378.4 L368.8,380.6 L365.6,380.4 L362.5,379.5 L359.4,378.1 L356.2,377.7 L353.1,377.6 L350.0,377.9 L346.9,377.1 L343.8,378.2 L340.6,377.8 L337.5,380.2 L334.4,380.4 L331.2,379.3 L328.1,378.5 L325.0,381.0 L321.9,379.1 L318.8,379.4 L315.6,378.5 L312.5,379.9 L309.4,380.4 L306.2,380.6 L303.1,379.9 L300.0,381.0 L296.9,379.5 L293.8,380.5 L290.6,380.1 L287.5,381.2 L284.4,380.2 L281.2,380.2 L278.1,381.2 L275.0,381.1 L271.9,382.4 L268.8,382.3 L265.6,383.2 L262.5,383.0 L259.4,383.3 L256.2,384.0 L253.1,382.5 L250.0,382.4 L246.9,384.6 L243.8,382.0 L240.6,383.9 L237.5,383.7 L234.4,381.9 L231.2,384.4 L228.1,384.7 L225.0,383.9 L221.9,384.3 L218.8,384.6 L215.6,382.5 L212.5,383.8 L209.4,383.8 L206.2,384.9 L203.1,384.9 L200.0,385.0 L197.0,384.2 L193.9,385.2 L190.9,384.5 L187.9,384.5 L184.8,383.0 L181.8,382.3 L178.8,382.6 L175.8,383.3 L172.7,382.5 L169.7,384.8 L166.7,383.9 L163.6,384.0 L160.6,384.0 L157.6,384.2 L154.5,383.5 L151.5,381.9 L148.5,384.4 L145.5,384.2 L142.4,383.4 L139.4,383.5 L136.4,383.9 L133.3,381.9 L130.3,384.1 L127.3,382.5 L124.2,381.9 L121.2,382.5 L118.2,383.9 L115.2,382.2 L112.1,383.9 L109.1,384.6 L106.1,383.0 L103.0,382.7 L100.0,382.9 L97.0,383.5 L93.9,383.7 L90.9,383.2 L87.9,383.2 L84.8,381.3 L81.8,381.5 L78.8,381.8 L75.8,383.3 L72.7,381.8 L69.7,382.6 L66.7,380.8 L63.6,380.9 L60.6,381.5 L57.6,382.7 L54.5,382.7 L51.5,382.6 L48.5,381.3 L45.5,382.0 L42.4,381.7 L39.4,381.7 L36.4,380.5 L33.3,382.9 L30.3,380.6 L27.3,383.1 L24.2,382.9 L21.2,379.9 L18.2,381.2 L15.2,382.3 L12.1,382.7 L9.1,381.0 L6.1,380.4 L3.0,380.1 L0.0,381.0 L0,452 Z" fill="#d3c6bd"/>
<path d="M805,452 L805.0,386.4 L801.9,386.4 L798.8,385.9 L795.6,386.0 L792.5,383.2 L789.4,384.1 L786.2,382.4 L783.1,381.9 L780.0,382.9 L776.9,381.2 L773.8,380.5 L770.8,380.3 L767.7,379.9 L764.6,377.6 L761.5,377.3 L758.5,376.1 L755.4,375.3 L752.3,375.0 L749.2,373.4 L746.2,372.8 L743.1,371.8 L740.0,372.4 L736.9,372.7 L733.8,374.4 L730.8,375.6 L727.7,374.5 L724.6,376.6 L721.5,378.9 L718.5,379.6 L715.4,378.5 L712.3,379.5 L709.2,381.6 L706.2,381.5 L703.1,383.1 L700.0,383.6 L696.7,385.0 L693.3,384.9 L690.0,384.8 L686.7,381.9 L683.3,383.2 L680.0,382.5 L677.0,380.3 L674.0,382.0 L671.0,381.7 L668.0,378.7 L665.0,380.4 L662.0,378.1 L659.0,377.8 L656.0,378.8 L653.0,377.7 L650.0,374.9 L647.0,375.2 L644.0,374.8 L641.0,373.7 L638.0,372.6 L635.0,372.4 L632.0,373.1 L629.0,370.3 L626.0,371.4 L623.0,370.4 L620.0,368.5 L617.0,369.4 L614.0,370.2 L611.0,369.7 L608.0,368.2 L605.0,371.1 L602.0,370.3 L599.0,370.8 L596.0,367.9 L593.0,368.3 L590.0,367.5 L587.0,369.8 L584.0,368.1 L581.0,367.5 L578.0,368.4 L575.0,369.8 L572.0,369.4 L569.0,367.5 L566.0,367.1 L563.0,369.4 L560.0,368.2 L556.9,368.4 L553.8,366.2 L550.8,365.9 L547.7,367.7 L544.6,366.6 L541.5,365.2 L538.5,367.8 L535.4,366.6 L532.3,366.9 L529.2,364.4 L526.2,366.6 L523.1,363.8 L520.0,366.2 L517.0,365.5 L514.0,365.7 L511.0,367.0 L508.0,368.8 L505.0,367.3 L502.0,367.4 L499.0,369.3 L496.0,369.0 L493.0,369.2 L490.0,369.9 L487.0,370.2 L484.0,371.2 L481.0,372.2 L478.0,372.8 L475.0,374.8 L472.0,373.9 L469.0,375.2 L466.0,374.8 L463.0,375.9 L460.0,375.5 L457.0,376.5 L454.0,375.9 L451.0,378.5 L448.0,378.2 L445.0,377.3 L442.0,378.4 L439.0,380.1 L436.0,377.7 L433.0,380.3 L430.0,379.3 L427.0,379.7 L424.0,381.1 L421.0,379.9 L418.0,380.5 L415.0,381.4 L412.0,382.5 L409.0,380.7 L406.0,382.6 L403.0,382.4 L400.0,382.4 L396.9,381.4 L393.8,381.0 L390.6,379.8 L387.5,379.8 L384.4,379.4 L381.2,381.3 L378.1,379.5 L375.0,378.9 L371.9,378.4 L368.8,380.6 L365.6,380.4 L362.5,379.5 L359.4,378.1 L356.2,377.7 L353.1,377.6 L350.0,377.9 L346.9,377.1 L343.8,378.2 L340.6,377.8 L337.5,380.2 L334.4,380.4 L331.2,379.3 L328.1,378.5 L325.0,381.0 L321.9,379.1 L318.8,379.4 L315.6,378.5 L312.5,379.9 L309.4,380.4 L306.2,380.6 L303.1,379.9 L300.0,381.0 L296.9,379.5 L293.8,380.5 L290.6,380.1 L287.5,381.2 L284.4,380.2 L281.2,380.2 L278.1,381.2 L275.0,381.1 L271.9,382.4 L268.8,382.3 L265.6,383.2 L262.5,383.0 L259.4,383.3 L256.2,384.0 L253.1,382.5 L250.0,382.4 L246.9,384.6 L243.8,382.0 L240.6,383.9 L237.5,383.7 L234.4,381.9 L231.2,384.4 L228.1,384.7 L225.0,383.9 L221.9,384.3 L218.8,384.6 L215.6,382.5 L212.5,383.8 L209.4,383.8 L206.2,384.9 L203.1,384.9 L200.0,385.0 L197.0,384.2 L193.9,385.2 L190.9,384.5 L187.9,384.5 L184.8,383.0 L181.8,382.3 L178.8,382.6 L175.8,383.3 L172.7,382.5 L169.7,384.8 L166.7,383.9 L163.6,384.0 L160.6,384.0 L157.6,384.2 L154.5,383.5 L151.5,381.9 L148.5,384.4 L145.5,384.2 L142.4,383.4 L139.4,383.5 L136.4,383.9 L133.3,381.9 L130.3,384.1 L127.3,382.5 L124.2,381.9 L121.2,382.5 L118.2,383.9 L115.2,382.2 L112.1,383.9 L109.1,384.6 L106.1,383.0 L103.0,382.7 L100.0,382.9 L97.0,383.5 L93.9,383.7 L90.9,383.2 L87.9,383.2 L84.8,381.3 L81.8,381.5 L78.8,381.8 L75.8,383.3 L72.7,381.8 L69.7,382.6 L66.7,380.8 L63.6,380.9 L60.6,381.5 L57.6,382.7 L54.5,382.7 L51.5,382.6 L48.5,381.3 L45.5,382.0 L42.4,381.7 L39.4,381.7 L36.4,380.5 L33.3,382.9 L30.3,380.6 L27.3,383.1 L24.2,382.9 L21.2,379.9 L18.2,381.2 L15.2,382.3 L12.1,382.7 L9.1,381.0 L6.1,380.4 L3.0,380.1 L0.0,381.0 L0,452 Z" fill="#fff" filter="url(#noise)" opacity="0.5"/>
<path d="M805,452 L805.0,386.4 L801.9,386.4 L798.8,385.9 L795.6,386.0 L792.5,383.2 L789.4,384.1 L786.2,382.4 L783.1,381.9 L780.0,382.9 L776.9,381.2 L773.8,380.5 L770.8,380.3 L767.7,379.9 L764.6,377.6 L761.5,377.3 L758.5,376.1 L755.4,375.3 L752.3,375.0 L749.2,373.4 L746.2,372.8 L743.1,371.8 L740.0,372.4 L736.9,372.7 L733.8,374.4 L730.8,375.6 L727.7,374.5 L724.6,376.6 L721.5,378.9 L718.5,379.6 L715.4,378.5 L712.3,379.5 L709.2,381.6 L706.2,381.5 L703.1,383.1 L700.0,383.6 L696.7,385.0 L693.3,384.9 L690.0,384.8 L686.7,381.9 L683.3,383.2 L680.0,382.5 L677.0,380.3 L674.0,382.0 L671.0,381.7 L668.0,378.7 L665.0,380.4 L662.0,378.1 L659.0,377.8 L656.0,378.8 L653.0,377.7 L650.0,374.9 L647.0,375.2 L644.0,374.8 L641.0,373.7 L638.0,372.6 L635.0,372.4 L632.0,373.1 L629.0,370.3 L626.0,371.4 L623.0,370.4 L620.0,368.5 L617.0,369.4 L614.0,370.2 L611.0,369.7 L608.0,368.2 L605.0,371.1 L602.0,370.3 L599.0,370.8 L596.0,367.9 L593.0,368.3 L590.0,367.5 L587.0,369.8 L584.0,368.1 L581.0,367.5 L578.0,368.4 L575.0,369.8 L572.0,369.4 L569.0,367.5 L566.0,367.1 L563.0,369.4 L560.0,368.2 L556.9,368.4 L553.8,366.2 L550.8,365.9 L547.7,367.7 L544.6,366.6 L541.5,365.2 L538.5,367.8 L535.4,366.6 L532.3,366.9 L529.2,364.4 L526.2,366.6 L523.1,363.8 L520.0,366.2 L517.0,365.5 L514.0,365.7 L511.0,367.0 L508.0,368.8 L505.0,367.3 L502.0,367.4 L499.0,369.3 L496.0,369.0 L493.0,369.2 L490.0,369.9 L487.0,370.2 L484.0,371.2 L481.0,372.2 L478.0,372.8 L475.0,374.8 L472.0,373.9 L469.0,375.2 L466.0,374.8 L463.0,375.9 L460.0,375.5 L457.0,376.5 L454.0,375.9 L451.0,378.5 L448.0,378.2 L445.0,377.3 L442.0,378.4 L439.0,380.1 L436.0,377.7 L433.0,380.3 L430.0,379.3 L427.0,379.7 L424.0,381.1 L421.0,379.9 L418.0,380.5 L415.0,381.4 L412.0,382.5 L409.0,380.7 L406.0,382.6 L403.0,382.4 L400.0,382.4 L396.9,381.4 L393.8,381.0 L390.6,379.8 L387.5,379.8 L384.4,379.4 L381.2,381.3 L378.1,379.5 L375.0,378.9 L371.9,378.4 L368.8,380.6 L365.6,380.4 L362.5,379.5 L359.4,378.1 L356.2,377.7 L353.1,377.6 L350.0,377.9 L346.9,377.1 L343.8,378.2 L340.6,377.8 L337.5,380.2 L334.4,380.4 L331.2,379.3 L328.1,378.5 L325.0,381.0 L321.9,379.1 L318.8,379.4 L315.6,378.5 L312.5,379.9 L309.4,380.4 L306.2,380.6 L303.1,379.9 L300.0,381.0 L296.9,379.5 L293.8,380.5 L290.6,380.1 L287.5,381.2 L284.4,380.2 L281.2,380.2 L278.1,381.2 L275.0,381.1 L271.9,382.4 L268.8,382.3 L265.6,383.2 L262.5,383.0 L259.4,383.3 L256.2,384.0 L253.1,382.5 L250.0,382.4 L246.9,384.6 L243.8,382.0 L240.6,383.9 L237.5,383.7 L234.4,381.9 L231.2,384.4 L228.1,384.7 L225.0,383.9 L221.9,384.3 L218.8,384.6 L215.6,382.5 L212.5,383.8 L209.4,383.8 L206.2,384.9 L203.1,384.9 L200.0,385.0 L197.0,384.2 L193.9,385.2 L190.9,384.5 L187.9,384.5 L184.8,383.0 L181.8,382.3 L178.8,382.6 L175.8,383.3 L172.7,382.5 L169.7,384.8 L166.7,383.9 L163.6,384.0 L160.6,384.0 L157.6,384.2 L154.5,383.5 L151.5,381.9 L148.5,384.4 L145.5,384.2 L142.4,383.4 L139.4,383.5 L136.4,383.9 L133.3,381.9 L130.3,384.1 L127.3,382.5 L124.2,381.9 L121.2,382.5 L118.2,383.9 L115.2,382.2 L112.1,383.9 L109.1,384.6 L106.1,383.0 L103.0,382.7 L100.0,382.9 L97.0,383.5 L93.9,383.7 L90.9,383.2 L87.9,383.2 L84.8,381.3 L81.8,381.5 L78.8,381.8 L75.8,383.3 L72.7,381.8 L69.7,382.6 L66.7,380.8 L63.6,380.9 L60.6,381.5 L57.6,382.7 L54.5,382.7 L51.5,382.6 L48.5,381.3 L45.5,382.0 L42.4,381.7 L39.4,381.7 L36.4,380.5 L33.3,382.9 L30.3,380.6 L27.3,383.1 L24.2,382.9 L21.2,379.9 L18.2,381.2 L15.2,382.3 L12.1,382.7 L9.1,381.0 L6.1,380.4 L3.0,380.1 L0.0,381.0 L0,452 Z" fill="#fff" filter="url(#mottle)" opacity="0.5"/>
<g fill="#6a5548" opacity="0.4" filter="url(#fl)"><circle cx="325" cy="25" r="1.5"/><circle cx="170" cy="55" r="1.2"/><circle cx="520" cy="40" r="1.0"/><circle cx="277" cy="38" r="1.3"/><circle cx="565" cy="8" r="1.2"/><circle cx="340" cy="50" r="2.5"/><circle cx="740" cy="55" r="1.2"/><circle cx="620" cy="35" r="1.0"/><circle cx="80" cy="30" r="1.0"/><circle cx="455" cy="55" r="1.0"/><circle cx="780" cy="20" r="1.2"/><circle cx="660" cy="50" r="1.0"/><circle cx="430" cy="420" r="1.3"/><circle cx="580" cy="430" r="1.0"/><circle cx="700" cy="400" r="1.2"/><circle cx="240" cy="400" r="1.0"/></g><ellipse cx="340" cy="32" rx="4" ry="7" fill="#9a6a50" opacity="0.35"/><g filter="url(#fl)"><path d="M24,300 Q20,360 22,400 Q26,430 24,452" stroke="#3e2224" stroke-width="2.2" fill="none"/><path d="M22,395 Q16,405 12,410 M22,410 Q28,430 34,452" stroke="#3e2224" stroke-width="1.6" fill="none"/><path d="M33,152 Q34,230 40,300 Q50,370 56,410 Q54,435 50,452" stroke="#6c7e4a" stroke-width="3.2" fill="none"/><path d="M36,160 Q22,172 10,178 M36,178 Q25,200 16,225 M40,205 Q50,195 60,186 M42,250 Q32,238 28,224 M42,240 Q52,215 62,200 M42,262 Q48,240 50,226" stroke="#748650" stroke-width="1.3" fill="none"/><path d="M106,318 Q90,370 60,420 Q52,440 50,452" stroke="#6c7e4a" stroke-width="2.8" fill="none"/><path d="M55,395 Q48,360 52,330 M62,380 Q70,345 70,318 M66,372 Q82,350 100,330 M62,430 Q78,420 92,412 M70,422 Q84,412 100,408" stroke="#748650" stroke-width="1.6" fill="none"/><path d="M118,312 Q110,350 95,380 Q78,420 62,452" stroke="#4a2628" stroke-width="2" fill="none"/><path d="M103,346 Q98,360 100,370 M110,340 Q120,350 112,372" stroke="#4a2628" stroke-width="1.4" fill="none"/><path d="M171,368 Q140,405 118,452" stroke="#6c7e4a" stroke-width="2.6" fill="none"/><path d="M171,368 Q182,362 196,358 M171,372 Q188,372 200,370 M160,376 Q145,395 128,410 Q100,430 80,452 M119,452 Q150,430 210,414 M178,423 Q182,412 188,400 M185,425 Q195,430 202,432 M136,380 Q140,370 142,362" stroke="#6c7e4a" stroke-width="1.4" fill="none"/><ellipse cx="8.5" cy="287.4" rx="6.7" ry="5.3" transform="rotate(91 8.5 287.4)" fill="#d03048"/><ellipse cx="28.5" cy="303.2" rx="4.9" ry="4.1" transform="rotate(34 28.5 303.2)" fill="#7a0e1c"/><ellipse cx="20.4" cy="287.8" rx="6.2" ry="5.5" transform="rotate(8 20.4 287.8)" fill="#7a0e1c"/><ellipse cx="37.1" cy="277.6" rx="5.5" ry="3.6" transform="rotate(3 37.1 277.6)" fill="#d03048"/><ellipse cx="24.5" cy="283.4" rx="6.5" ry="5.5" transform="rotate(140 24.5 283.4)" fill="#c22238"/><ellipse cx="5.2" cy="290.6" rx="5.1" ry="4.3" transform="rotate(90 5.2 290.6)" fill="#b3182c"/><ellipse cx="13.1" cy="285.2" rx="7.0" ry="7.0" transform="rotate(151 13.1 285.2)" fill="#c22238"/><ellipse cx="18.7" cy="291.9" rx="4.2" ry="2.6" transform="rotate(138 18.7 291.9)" fill="#7a0e1c"/><ellipse cx="29.4" cy="289.8" rx="3.3" ry="2.0" transform="rotate(123 29.4 289.8)" fill="#9e1424"/><ellipse cx="26.7" cy="305.8" rx="4.9" ry="4.8" transform="rotate(72 26.7 305.8)" fill="#b3182c"/><ellipse cx="15.1" cy="278.0" rx="5.7" ry="4.2" transform="rotate(56 15.1 278.0)" fill="#b3182c"/><ellipse cx="38.5" cy="277.1" rx="3.5" ry="2.4" transform="rotate(18 38.5 277.1)" fill="#b3182c"/><ellipse cx="9.3" cy="285.7" rx="5.7" ry="3.9" transform="rotate(92 9.3 285.7)" fill="#9e1424"/><ellipse cx="12.2" cy="289.1" rx="4.6" ry="4.6" transform="rotate(0 12.2 289.1)" fill="#d03048"/><ellipse cx="15.8" cy="304.8" rx="3.8" ry="2.9" transform="rotate(154 15.8 304.8)" fill="#d03048"/><ellipse cx="38.1" cy="297.2" rx="3.9" ry="2.7" transform="rotate(139 38.1 297.2)" fill="#c22238"/><ellipse cx="27.5" cy="269.1" rx="3.3" ry="2.3" transform="rotate(115 27.5 269.1)" fill="#b3182c"/><ellipse cx="13.1" cy="273.5" rx="4.8" ry="4.7" transform="rotate(87 13.1 273.5)" fill="#d03048"/><ellipse cx="29.4" cy="293.1" rx="5.5" ry="4.0" transform="rotate(41 29.4 293.1)" fill="#d03048"/><ellipse cx="22.0" cy="291.6" rx="6.0" ry="5.8" transform="rotate(35 22.0 291.6)" fill="#7a0e1c"/><ellipse cx="32.9" cy="269.0" rx="4.7" ry="3.0" transform="rotate(7 32.9 269.0)" fill="#c22238"/><ellipse cx="23.2" cy="303.0" rx="4.0" ry="3.7" transform="rotate(107 23.2 303.0)" fill="#c22238"/><ellipse cx="3.0" cy="278.9" rx="6.9" ry="4.5" transform="rotate(86 3.0 278.9)" fill="#d03048"/><ellipse cx="15.0" cy="274.0" rx="6.7" ry="4.5" transform="rotate(3 15.0 274.0)" fill="#c22238"/><ellipse cx="14.6" cy="288.0" rx="3.2" ry="2.3" transform="rotate(96 14.6 288.0)" fill="#9e1424"/><ellipse cx="27.1" cy="286.3" rx="4.8" ry="3.5" transform="rotate(132 27.1 286.3)" fill="#d03048"/><ellipse cx="16.7" cy="278.0" rx="3.1" ry="1.9" transform="rotate(164 16.7 278.0)" fill="#c22238"/><ellipse cx="23.9" cy="281.4" rx="5.5" ry="4.4" transform="rotate(131 23.9 281.4)" fill="#c22238"/><ellipse cx="24.7" cy="286.1" rx="4.8" ry="3.6" transform="rotate(8 24.7 286.1)" fill="#9e1424"/><ellipse cx="27.1" cy="258.3" rx="4.4" ry="3.9" transform="rotate(162 27.1 258.3)" fill="#7a0e1c"/><ellipse cx="24.3" cy="280.9" rx="5.0" ry="3.0" transform="rotate(119 24.3 280.9)" fill="#7a0e1c"/><ellipse cx="9.1" cy="272.4" rx="3.3" ry="2.8" transform="rotate(179 9.1 272.4)" fill="#7a0e1c"/><ellipse cx="20.5" cy="267.4" rx="5.9" ry="4.9" transform="rotate(79 20.5 267.4)" fill="#d03048"/><ellipse cx="36.6" cy="293.0" rx="3.1" ry="2.6" transform="rotate(87 36.6 293.0)" fill="#9e1424"/><ellipse cx="39.7" cy="277.7" rx="5.0" ry="3.3" transform="rotate(2 39.7 277.7)" fill="#c22238"/><ellipse cx="39.8" cy="277.2" rx="4.4" ry="4.1" transform="rotate(41 39.8 277.2)" fill="#b3182c"/><ellipse cx="49.3" cy="272.3" rx="4.3" ry="2.9" transform="rotate(163 49.3 272.3)" fill="#b3182c"/><ellipse cx="46.6" cy="273.5" rx="4.5" ry="4.2" transform="rotate(123 46.6 273.5)" fill="#b3182c"/><ellipse cx="55.0" cy="276.3" rx="5.7" ry="4.6" transform="rotate(16 55.0 276.3)" fill="#7a0e1c"/><ellipse cx="56.1" cy="274.8" rx="4.3" ry="2.8" transform="rotate(56 56.1 274.8)" fill="#d03048"/><ellipse cx="37.3" cy="271.1" rx="5.7" ry="4.7" transform="rotate(91 37.3 271.1)" fill="#b3182c"/><ellipse cx="44.3" cy="280.9" rx="4.8" ry="3.8" transform="rotate(69 44.3 280.9)" fill="#b3182c"/><ellipse cx="49.7" cy="273.6" rx="3.6" ry="3.3" transform="rotate(47 49.7 273.6)" fill="#c22238"/><ellipse cx="58.0" cy="270.1" rx="3.9" ry="2.8" transform="rotate(60 58.0 270.1)" fill="#c22238"/><ellipse cx="37.9" cy="275.1" rx="4.5" ry="2.8" transform="rotate(148 37.9 275.1)" fill="#7a0e1c"/><ellipse cx="53.7" cy="276.3" rx="5.0" ry="3.1" transform="rotate(37 53.7 276.3)" fill="#d03048"/><ellipse cx="60.9" cy="281.9" rx="3.5" ry="3.1" transform="rotate(7 60.9 281.9)" fill="#c22238"/><ellipse cx="40.2" cy="276.1" rx="5.2" ry="4.2" transform="rotate(66 40.2 276.1)" fill="#c22238"/><ellipse cx="50.0" cy="284.8" rx="5.9" ry="4.7" transform="rotate(172 50.0 284.8)" fill="#9e1424"/><ellipse cx="41.1" cy="278.1" rx="3.5" ry="3.2" transform="rotate(40 41.1 278.1)" fill="#d03048"/><ellipse cx="59.3" cy="276.3" rx="5.3" ry="3.9" transform="rotate(43 59.3 276.3)" fill="#b3182c"/><ellipse cx="45.1" cy="275.9" rx="3.3" ry="2.5" transform="rotate(98 45.1 275.9)" fill="#9e1424"/><ellipse cx="60.0" cy="277.1" rx="5.4" ry="5.0" transform="rotate(115 60.0 277.1)" fill="#9e1424"/><ellipse cx="54.3" cy="267.0" rx="4.5" ry="3.3" transform="rotate(123 54.3 267.0)" fill="#7a0e1c"/><ellipse cx="56.2" cy="273.1" rx="3.9" ry="3.7" transform="rotate(50 56.2 273.1)" fill="#d03048"/><ellipse cx="45.7" cy="269.4" rx="5.4" ry="4.8" transform="rotate(94 45.7 269.4)" fill="#b3182c"/><ellipse cx="89.3" cy="281.5" rx="5.1" ry="4.7" transform="rotate(33 89.3 281.5)" fill="#9e1424"/><ellipse cx="82.6" cy="262.5" rx="4.9" ry="3.3" transform="rotate(13 82.6 262.5)" fill="#9e1424"/><ellipse cx="89.9" cy="270.5" rx="3.4" ry="3.0" transform="rotate(180 89.9 270.5)" fill="#c22238"/><ellipse cx="91.8" cy="269.6" rx="5.4" ry="5.1" transform="rotate(47 91.8 269.6)" fill="#7a0e1c"/><ellipse cx="89.5" cy="260.4" rx="5.4" ry="3.8" transform="rotate(153 89.5 260.4)" fill="#7a0e1c"/><ellipse cx="99.0" cy="267.0" rx="5.9" ry="5.2" transform="rotate(160 99.0 267.0)" fill="#c22238"/><ellipse cx="85.3" cy="266.7" rx="4.8" ry="4.1" transform="rotate(47 85.3 266.7)" fill="#7a0e1c"/><ellipse cx="77.3" cy="268.6" rx="3.4" ry="3.0" transform="rotate(80 77.3 268.6)" fill="#9e1424"/><ellipse cx="88.5" cy="276.1" rx="4.1" ry="3.0" transform="rotate(47 88.5 276.1)" fill="#c22238"/><ellipse cx="86.3" cy="274.2" rx="4.5" ry="3.1" transform="rotate(42 86.3 274.2)" fill="#9e1424"/><ellipse cx="88.6" cy="268.6" rx="4.3" ry="3.7" transform="rotate(83 88.6 268.6)" fill="#b3182c"/><ellipse cx="87.0" cy="260.7" rx="3.1" ry="2.1" transform="rotate(145 87.0 260.7)" fill="#7a0e1c"/><ellipse cx="86.6" cy="268.9" rx="4.2" ry="4.0" transform="rotate(160 86.6 268.9)" fill="#c22238"/><ellipse cx="94.2" cy="282.4" rx="4.1" ry="3.7" transform="rotate(25 94.2 282.4)" fill="#d03048"/><ellipse cx="90.8" cy="279.9" rx="5.6" ry="3.4" transform="rotate(126 90.8 279.9)" fill="#b3182c"/><ellipse cx="81.6" cy="279.7" rx="4.0" ry="2.9" transform="rotate(30 81.6 279.7)" fill="#d03048"/><ellipse cx="95.0" cy="275.2" rx="3.2" ry="2.8" transform="rotate(100 95.0 275.2)" fill="#d03048"/><ellipse cx="84.7" cy="260.9" rx="5.5" ry="4.7" transform="rotate(95 84.7 260.9)" fill="#9e1424"/><ellipse cx="94.5" cy="272.0" rx="3.9" ry="2.8" transform="rotate(108 94.5 272.0)" fill="#b3182c"/><ellipse cx="100.0" cy="268.9" rx="5.6" ry="3.4" transform="rotate(58 100.0 268.9)" fill="#9e1424"/><ellipse cx="74.3" cy="272.3" rx="4.6" ry="3.6" transform="rotate(121 74.3 272.3)" fill="#c22238"/><ellipse cx="92.7" cy="265.6" rx="5.1" ry="3.4" transform="rotate(26 92.7 265.6)" fill="#7a0e1c"/><ellipse cx="84.2" cy="262.0" rx="3.8" ry="3.2" transform="rotate(64 84.2 262.0)" fill="#9e1424"/><ellipse cx="82.0" cy="268.1" rx="4.9" ry="3.8" transform="rotate(57 82.0 268.1)" fill="#7a0e1c"/><ellipse cx="101.6" cy="277.3" rx="4.8" ry="2.9" transform="rotate(139 101.6 277.3)" fill="#9e1424"/><ellipse cx="74.9" cy="275.7" rx="4.2" ry="2.6" transform="rotate(95 74.9 275.7)" fill="#9e1424"/><ellipse cx="91.6" cy="273.6" rx="4.1" ry="2.7" transform="rotate(55 91.6 273.6)" fill="#d03048"/><ellipse cx="88.4" cy="273.0" rx="3.4" ry="2.5" transform="rotate(80 88.4 273.0)" fill="#d03048"/><ellipse cx="33.8" cy="253.0" rx="4.3" ry="4.2" transform="rotate(49 33.8 253.0)" fill="#4a1018"/><ellipse cx="29.7" cy="251.2" rx="3.9" ry="3.1" transform="rotate(157 29.7 251.2)" fill="#4a1018"/><ellipse cx="30.3" cy="248.4" rx="3.4" ry="3.3" transform="rotate(64 30.3 248.4)" fill="#4a1018"/><ellipse cx="27.1" cy="253.5" rx="4.0" ry="2.7" transform="rotate(120 27.1 253.5)" fill="#4a1018"/><ellipse cx="32.4" cy="254.0" rx="3.2" ry="2.4" transform="rotate(15 32.4 254.0)" fill="#4a1018"/><ellipse cx="32.0" cy="247.3" rx="4.2" ry="4.1" transform="rotate(161 32.0 247.3)" fill="#4a1018"/><ellipse cx="142.0" cy="285.4" rx="4.7" ry="3.7" transform="rotate(39 142.0 285.4)" fill="#e8b49c"/><ellipse cx="138.2" cy="240.7" rx="4.3" ry="3.0" transform="rotate(1 138.2 240.7)" fill="#c9a048"/><ellipse cx="145.1" cy="253.6" rx="3.0" ry="2.7" transform="rotate(166 145.1 253.6)" fill="#f0c0a8"/><ellipse cx="112.8" cy="275.1" rx="5.2" ry="4.0" transform="rotate(80 112.8 275.1)" fill="#c9a048"/><ellipse cx="115.9" cy="255.2" rx="4.8" ry="4.7" transform="rotate(4 115.9 255.2)" fill="#e9ae92"/><ellipse cx="147.9" cy="285.0" rx="4.1" ry="3.4" transform="rotate(62 147.9 285.0)" fill="#e8b49c"/><ellipse cx="143.0" cy="283.6" rx="4.1" ry="3.8" transform="rotate(13 143.0 283.6)" fill="#e9a58c"/><ellipse cx="138.6" cy="294.2" rx="5.6" ry="5.1" transform="rotate(137 138.6 294.2)" fill="#b8903c"/><ellipse cx="137.5" cy="261.5" rx="4.5" ry="3.7" transform="rotate(70 137.5 261.5)" fill="#c9a048"/><ellipse cx="151.1" cy="247.3" rx="3.9" ry="2.9" transform="rotate(81 151.1 247.3)" fill="#f0b8a0"/><ellipse cx="127.1" cy="282.0" rx="3.4" ry="3.2" transform="rotate(29 127.1 282.0)" fill="#e8b49c"/><ellipse cx="137.5" cy="262.1" rx="4.6" ry="3.7" transform="rotate(103 137.5 262.1)" fill="#c9a048"/><ellipse cx="117.5" cy="253.1" rx="3.1" ry="2.1" transform="rotate(63 117.5 253.1)" fill="#c9a048"/><ellipse cx="123.8" cy="282.5" rx="3.6" ry="2.3" transform="rotate(12 123.8 282.5)" fill="#f2b49c"/><ellipse cx="135.1" cy="243.4" rx="4.9" ry="4.3" transform="rotate(162 135.1 243.4)" fill="#e9a58c"/><ellipse cx="114.8" cy="280.6" rx="5.9" ry="4.9" transform="rotate(159 114.8 280.6)" fill="#e8b49c"/><ellipse cx="115.8" cy="261.0" rx="5.8" ry="4.0" transform="rotate(101 115.8 261.0)" fill="#e8b49c"/><ellipse cx="139.4" cy="234.6" rx="4.2" ry="3.9" transform="rotate(9 139.4 234.6)" fill="#d9a050"/><ellipse cx="131.4" cy="258.2" rx="3.4" ry="2.6" transform="rotate(157 131.4 258.2)" fill="#f2b49c"/><ellipse cx="151.4" cy="259.0" rx="4.2" ry="2.9" transform="rotate(173 151.4 259.0)" fill="#d8b060"/><ellipse cx="145.0" cy="250.5" rx="5.8" ry="5.6" transform="rotate(66 145.0 250.5)" fill="#f2b49c"/><ellipse cx="144.9" cy="245.0" rx="4.0" ry="3.3" transform="rotate(153 144.9 245.0)" fill="#d9a050"/><ellipse cx="143.3" cy="280.9" rx="3.0" ry="2.7" transform="rotate(69 143.3 280.9)" fill="#f2b49c"/><ellipse cx="135.2" cy="261.0" rx="4.6" ry="3.9" transform="rotate(153 135.2 261.0)" fill="#b8903c"/><ellipse cx="117.6" cy="274.9" rx="5.1" ry="4.7" transform="rotate(25 117.6 274.9)" fill="#f2b49c"/><ellipse cx="137.4" cy="266.6" rx="2.6" ry="2.0" transform="rotate(25 137.4 266.6)" fill="#e9ae92"/><ellipse cx="129.4" cy="253.9" rx="4.4" ry="3.2" transform="rotate(89 129.4 253.9)" fill="#e9a58c"/><ellipse cx="127.3" cy="253.6" rx="5.5" ry="3.7" transform="rotate(134 127.3 253.6)" fill="#f0c0a8"/><ellipse cx="121.4" cy="248.3" rx="5.1" ry="3.2" transform="rotate(167 121.4 248.3)" fill="#f0b8a0"/><ellipse cx="128.9" cy="263.5" rx="5.2" ry="3.5" transform="rotate(128 128.9 263.5)" fill="#d9a050"/><ellipse cx="148.9" cy="256.4" rx="5.1" ry="3.6" transform="rotate(28 148.9 256.4)" fill="#d9a050"/><ellipse cx="140.9" cy="234.8" rx="4.2" ry="3.5" transform="rotate(98 140.9 234.8)" fill="#f0c0a8"/><ellipse cx="114.7" cy="260.5" rx="5.9" ry="4.3" transform="rotate(126 114.7 260.5)" fill="#d8b060"/><ellipse cx="133.4" cy="249.5" rx="4.7" ry="3.4" transform="rotate(36 133.4 249.5)" fill="#e9ae92"/><ellipse cx="123.9" cy="292.8" rx="2.9" ry="1.8" transform="rotate(13 123.9 292.8)" fill="#e8b49c"/><ellipse cx="111.7" cy="261.0" rx="4.9" ry="4.3" transform="rotate(85 111.7 261.0)" fill="#d8b060"/><ellipse cx="123.2" cy="274.6" rx="3.3" ry="2.0" transform="rotate(78 123.2 274.6)" fill="#e9a58c"/><ellipse cx="130.4" cy="286.4" rx="3.9" ry="3.0" transform="rotate(144 130.4 286.4)" fill="#f0b8a0"/><ellipse cx="122.3" cy="276.6" rx="4.7" ry="4.6" transform="rotate(15 122.3 276.6)" fill="#e8b49c"/><ellipse cx="138.7" cy="278.6" rx="4.6" ry="3.2" transform="rotate(81 138.7 278.6)" fill="#b8903c"/><ellipse cx="123.1" cy="235.0" rx="4.9" ry="4.3" transform="rotate(44 123.1 235.0)" fill="#e8b49c"/><ellipse cx="120.6" cy="278.7" rx="5.4" ry="5.3" transform="rotate(178 120.6 278.7)" fill="#f0c0a8"/><ellipse cx="137.4" cy="273.1" rx="5.6" ry="4.9" transform="rotate(16 137.4 273.1)" fill="#f2b49c"/><ellipse cx="142.4" cy="270.0" rx="5.8" ry="5.2" transform="rotate(83 142.4 270.0)" fill="#e9ae92"/><ellipse cx="140.5" cy="261.3" rx="4.0" ry="3.5" transform="rotate(67 140.5 261.3)" fill="#b8903c"/><ellipse cx="128.9" cy="248.2" rx="5.8" ry="4.2" transform="rotate(46 128.9 248.2)" fill="#f2b49c"/><ellipse cx="144.8" cy="248.7" rx="3.3" ry="2.9" transform="rotate(129 144.8 248.7)" fill="#f2b49c"/><ellipse cx="146.0" cy="254.2" rx="4.0" ry="3.4" transform="rotate(51 146.0 254.2)" fill="#f2b49c"/><ellipse cx="124.8" cy="239.8" rx="2.8" ry="2.8" transform="rotate(39 124.8 239.8)" fill="#c9a048"/><ellipse cx="140.8" cy="231.7" rx="5.0" ry="3.0" transform="rotate(90 140.8 231.7)" fill="#f0c0a8"/><ellipse cx="122.2" cy="274.4" rx="4.1" ry="4.1" transform="rotate(169 122.2 274.4)" fill="#f2b49c"/><ellipse cx="142.0" cy="271.4" rx="4.1" ry="3.9" transform="rotate(67 142.0 271.4)" fill="#f2b49c"/><ellipse cx="114.2" cy="248.2" rx="4.0" ry="3.8" transform="rotate(56 114.2 248.2)" fill="#f0b8a0"/><ellipse cx="120.4" cy="275.6" rx="3.3" ry="3.0" transform="rotate(152 120.4 275.6)" fill="#e8b49c"/><ellipse cx="134.5" cy="260.0" rx="4.5" ry="2.9" transform="rotate(162 134.5 260.0)" fill="#e9a58c"/><ellipse cx="141.3" cy="280.3" rx="4.3" ry="3.5" transform="rotate(88 141.3 280.3)" fill="#c9a048"/><ellipse cx="137.1" cy="271.0" rx="3.5" ry="3.0" transform="rotate(2 137.1 271.0)" fill="#e9ae92"/><ellipse cx="129.1" cy="251.2" rx="2.8" ry="2.6" transform="rotate(65 129.1 251.2)" fill="#c9a048"/><ellipse cx="135.8" cy="263.7" rx="4.2" ry="3.7" transform="rotate(118 135.8 263.7)" fill="#f2b49c"/><ellipse cx="142.0" cy="264.9" rx="3.8" ry="2.6" transform="rotate(36 142.0 264.9)" fill="#e9a58c"/><ellipse cx="130.9" cy="239.1" rx="2.8" ry="2.6" transform="rotate(38 130.9 239.1)" fill="#f0c0a8"/><ellipse cx="130.7" cy="237.1" rx="4.7" ry="4.0" transform="rotate(4 130.7 237.1)" fill="#c9a048"/><ellipse cx="125.6" cy="262.4" rx="5.5" ry="5.1" transform="rotate(163 125.6 262.4)" fill="#f0c0a8"/><ellipse cx="136.9" cy="290.6" rx="5.7" ry="4.6" transform="rotate(164 136.9 290.6)" fill="#d9a050"/><ellipse cx="116.6" cy="282.9" rx="5.8" ry="5.3" transform="rotate(2 116.6 282.9)" fill="#c9a048"/><ellipse cx="137.6" cy="275.6" rx="2.6" ry="1.9" transform="rotate(135 137.6 275.6)" fill="#f2b49c"/><ellipse cx="146.7" cy="252.1" rx="5.6" ry="3.8" transform="rotate(180 146.7 252.1)" fill="#d8b060"/><ellipse cx="129.9" cy="282.5" rx="5.2" ry="5.1" transform="rotate(164 129.9 282.5)" fill="#e9a58c"/><ellipse cx="126.5" cy="268.8" rx="4.4" ry="4.1" transform="rotate(65 126.5 268.8)" fill="#f2b49c"/><ellipse cx="153.8" cy="260.8" rx="5.8" ry="5.3" transform="rotate(177 153.8 260.8)" fill="#e9a58c"/><ellipse cx="109.6" cy="241.2" rx="3.1" ry="3.1" transform="rotate(33 109.6 241.2)" fill="#f2c8b0"/><ellipse cx="105.3" cy="232.8" rx="5.0" ry="3.1" transform="rotate(48 105.3 232.8)" fill="#f2c8b0"/><ellipse cx="102.3" cy="248.7" rx="5.3" ry="4.7" transform="rotate(166 102.3 248.7)" fill="#f2c8b0"/><ellipse cx="104.9" cy="241.5" rx="3.7" ry="2.8" transform="rotate(32 104.9 241.5)" fill="#f2c8b0"/><ellipse cx="96.0" cy="237.2" rx="4.9" ry="4.9" transform="rotate(102 96.0 237.2)" fill="#f0c4b0"/><ellipse cx="101.9" cy="239.1" rx="5.4" ry="3.9" transform="rotate(141 101.9 239.1)" fill="#edbea8"/><ellipse cx="105.0" cy="246.5" rx="4.7" ry="3.7" transform="rotate(62 105.0 246.5)" fill="#f2c8b0"/><ellipse cx="101.4" cy="244.1" rx="3.7" ry="3.5" transform="rotate(72 101.4 244.1)" fill="#edbea8"/><ellipse cx="103.7" cy="247.2" rx="4.5" ry="3.2" transform="rotate(107 103.7 247.2)" fill="#a08a40"/><ellipse cx="106.5" cy="232.6" rx="4.1" ry="2.6" transform="rotate(80 106.5 232.6)" fill="#f2c8b0"/><ellipse cx="99.7" cy="244.4" rx="5.3" ry="5.2" transform="rotate(92 99.7 244.4)" fill="#a08a40"/><ellipse cx="113.5" cy="242.3" rx="3.5" ry="2.1" transform="rotate(68 113.5 242.3)" fill="#edbea8"/><ellipse cx="102.9" cy="246.8" rx="3.5" ry="2.1" transform="rotate(96 102.9 246.8)" fill="#edbea8"/><ellipse cx="104.3" cy="239.9" rx="3.5" ry="2.3" transform="rotate(27 104.3 239.9)" fill="#a08a40"/><ellipse cx="109.2" cy="242.8" rx="4.8" ry="3.1" transform="rotate(51 109.2 242.8)" fill="#a08a40"/><ellipse cx="103.7" cy="242.3" rx="4.8" ry="4.7" transform="rotate(20 103.7 242.3)" fill="#f0c4b0"/><ellipse cx="33.4" cy="150.2" rx="3.9" ry="3.4" transform="rotate(25 33.4 150.2)" fill="#ebb8a6"/><ellipse cx="12.1" cy="148.2" rx="3.0" ry="3.0" transform="rotate(6 12.1 148.2)" fill="#ebb8a6"/><ellipse cx="37.0" cy="155.2" rx="4.1" ry="3.1" transform="rotate(179 37.0 155.2)" fill="#ebb8a6"/><ellipse cx="40.6" cy="155.8" rx="5.6" ry="4.1" transform="rotate(37 40.6 155.8)" fill="#eab9a8"/><ellipse cx="15.1" cy="157.3" rx="3.2" ry="2.2" transform="rotate(105 15.1 157.3)" fill="#efc0ae"/><ellipse cx="31.1" cy="150.6" rx="3.1" ry="2.0" transform="rotate(27 31.1 150.6)" fill="#c9b060"/><ellipse cx="30.5" cy="149.9" rx="5.1" ry="4.8" transform="rotate(117 30.5 149.9)" fill="#e6c09e"/><ellipse cx="31.2" cy="155.8" rx="3.8" ry="2.8" transform="rotate(147 31.2 155.8)" fill="#eab9a8"/><ellipse cx="38.0" cy="151.3" rx="3.7" ry="2.8" transform="rotate(116 38.0 151.3)" fill="#c9b060"/><ellipse cx="24.8" cy="153.6" rx="5.1" ry="3.3" transform="rotate(139 24.8 153.6)" fill="#e6c09e"/><ellipse cx="10.1" cy="146.5" rx="5.4" ry="3.9" transform="rotate(31 10.1 146.5)" fill="#ebb8a6"/><ellipse cx="41.0" cy="146.5" rx="4.9" ry="3.1" transform="rotate(72 41.0 146.5)" fill="#e2b09a"/><ellipse cx="16.2" cy="142.0" rx="3.2" ry="2.5" transform="rotate(144 16.2 142.0)" fill="#eab9a8"/><ellipse cx="25.3" cy="150.9" rx="5.0" ry="3.5" transform="rotate(157 25.3 150.9)" fill="#f0c8b4"/><ellipse cx="33.5" cy="152.5" rx="3.7" ry="3.3" transform="rotate(154 33.5 152.5)" fill="#eab9a8"/><ellipse cx="41.9" cy="152.7" rx="4.3" ry="4.1" transform="rotate(177 41.9 152.7)" fill="#eab9a8"/><ellipse cx="26.2" cy="148.9" rx="2.9" ry="1.9" transform="rotate(131 26.2 148.9)" fill="#f0c8b4"/><ellipse cx="10.1" cy="150.1" rx="2.6" ry="2.1" transform="rotate(141 10.1 150.1)" fill="#eab9a8"/><ellipse cx="27.2" cy="150.5" rx="3.8" ry="2.7" transform="rotate(32 27.2 150.5)" fill="#ebb8a6"/><ellipse cx="37.6" cy="155.3" rx="4.6" ry="4.5" transform="rotate(160 37.6 155.3)" fill="#c9b060"/><ellipse cx="34.2" cy="158.3" rx="3.5" ry="2.4" transform="rotate(82 34.2 158.3)" fill="#f0c8b4"/><ellipse cx="11.8" cy="149.3" rx="4.3" ry="2.9" transform="rotate(35 11.8 149.3)" fill="#efc0ae"/><ellipse cx="12.1" cy="152.0" rx="4.1" ry="2.7" transform="rotate(22 12.1 152.0)" fill="#c9b060"/><ellipse cx="23.8" cy="153.0" rx="3.5" ry="2.6" transform="rotate(139 23.8 153.0)" fill="#ebb8a6"/><ellipse cx="31.4" cy="147.8" rx="4.0" ry="2.6" transform="rotate(69 31.4 147.8)" fill="#e2b09a"/><ellipse cx="33.2" cy="159.0" rx="3.6" ry="3.0" transform="rotate(165 33.2 159.0)" fill="#e2b09a"/><ellipse cx="26.3" cy="141.1" rx="2.6" ry="2.2" transform="rotate(161 26.3 141.1)" fill="#e2b09a"/><ellipse cx="16.2" cy="148.6" rx="5.0" ry="3.4" transform="rotate(6 16.2 148.6)" fill="#eab9a8"/><ellipse cx="22.3" cy="152.5" rx="3.3" ry="2.4" transform="rotate(126 22.3 152.5)" fill="#e2b09a"/><ellipse cx="34.1" cy="152.6" rx="5.9" ry="5.6" transform="rotate(125 34.1 152.6)" fill="#eab9a8"/><ellipse cx="13.2" cy="152.3" rx="4.8" ry="3.7" transform="rotate(12 13.2 152.3)" fill="#e6c09e"/><ellipse cx="24.3" cy="156.1" rx="2.5" ry="1.5" transform="rotate(68 24.3 156.1)" fill="#c9b060"/><ellipse cx="24.0" cy="159.1" rx="3.4" ry="2.4" transform="rotate(161 24.0 159.1)" fill="#e6c09e"/><ellipse cx="28.4" cy="153.1" rx="4.7" ry="4.3" transform="rotate(153 28.4 153.1)" fill="#f0c8b4"/><ellipse cx="21.5" cy="148.4" rx="3.8" ry="3.1" transform="rotate(169 21.5 148.4)" fill="#f0c8b4"/><ellipse cx="9.1" cy="151.9" rx="3.4" ry="3.1" transform="rotate(72 9.1 151.9)" fill="#e6c09e"/><ellipse cx="20.4" cy="148.6" rx="3.9" ry="3.7" transform="rotate(44 20.4 148.6)" fill="#f0c8b4"/><ellipse cx="29.2" cy="159.0" rx="3.9" ry="3.8" transform="rotate(49 29.2 159.0)" fill="#ebb8a6"/><ellipse cx="29.1" cy="148.2" rx="3.4" ry="2.7" transform="rotate(180 29.1 148.2)" fill="#e6c09e"/><ellipse cx="29.0" cy="145.1" rx="5.3" ry="5.2" transform="rotate(41 29.0 145.1)" fill="#c9b060"/><ellipse cx="10.5" cy="210.6" rx="3.3" ry="3.1" transform="rotate(89 10.5 210.6)" fill="#f0c8b4"/><ellipse cx="11.5" cy="209.7" rx="3.3" ry="2.1" transform="rotate(124 11.5 209.7)" fill="#eab9a8"/><ellipse cx="7.9" cy="208.1" rx="4.4" ry="2.9" transform="rotate(2 7.9 208.1)" fill="#f0c8b4"/><ellipse cx="8.4" cy="202.7" rx="3.2" ry="3.1" transform="rotate(80 8.4 202.7)" fill="#e2b09a"/><ellipse cx="13.0" cy="217.5" rx="2.8" ry="1.8" transform="rotate(4 13.0 217.5)" fill="#ebb8a6"/><ellipse cx="12.3" cy="203.4" rx="3.1" ry="2.4" transform="rotate(131 12.3 203.4)" fill="#eab9a8"/><ellipse cx="11.1" cy="218.8" rx="4.3" ry="3.6" transform="rotate(104 11.1 218.8)" fill="#c9b060"/><ellipse cx="11.3" cy="209.4" rx="3.2" ry="2.0" transform="rotate(119 11.3 209.4)" fill="#c9b060"/><ellipse cx="12.2" cy="207.3" rx="2.7" ry="2.1" transform="rotate(146 12.2 207.3)" fill="#eab9a8"/><ellipse cx="11.6" cy="219.9" rx="4.7" ry="3.0" transform="rotate(47 11.6 219.9)" fill="#efc0ae"/><ellipse cx="6.7" cy="215.5" rx="3.0" ry="1.8" transform="rotate(1 6.7 215.5)" fill="#efc0ae"/><ellipse cx="5.4" cy="195.4" rx="3.7" ry="3.7" transform="rotate(155 5.4 195.4)" fill="#efc0ae"/><ellipse cx="5.8" cy="217.0" rx="3.1" ry="2.3" transform="rotate(105 5.8 217.0)" fill="#e2b09a"/><ellipse cx="10.1" cy="220.0" rx="3.8" ry="3.2" transform="rotate(148 10.1 220.0)" fill="#f0c8b4"/><ellipse cx="43.8" cy="183.4" rx="4.5" ry="3.2" transform="rotate(117 43.8 183.4)" fill="#efc0ae"/><ellipse cx="55.7" cy="184.4" rx="4.1" ry="3.5" transform="rotate(91 55.7 184.4)" fill="#f0c8b4"/><ellipse cx="44.7" cy="185.1" rx="4.9" ry="4.2" transform="rotate(54 44.7 185.1)" fill="#e2b09a"/><ellipse cx="40.8" cy="185.1" rx="4.4" ry="4.1" transform="rotate(122 40.8 185.1)" fill="#c9b060"/><ellipse cx="58.5" cy="179.7" rx="3.9" ry="3.4" transform="rotate(21 58.5 179.7)" fill="#ebb8a6"/><ellipse cx="47.3" cy="192.8" rx="5.0" ry="5.0" transform="rotate(12 47.3 192.8)" fill="#e2b09a"/><ellipse cx="56.3" cy="188.8" rx="3.1" ry="2.2" transform="rotate(1 56.3 188.8)" fill="#efc0ae"/><ellipse cx="47.4" cy="181.3" rx="3.5" ry="3.0" transform="rotate(158 47.4 181.3)" fill="#e2b09a"/><ellipse cx="59.0" cy="181.2" rx="3.9" ry="2.5" transform="rotate(27 59.0 181.2)" fill="#ebb8a6"/><ellipse cx="52.1" cy="185.8" rx="3.5" ry="2.6" transform="rotate(156 52.1 185.8)" fill="#f0c8b4"/><ellipse cx="47.7" cy="181.9" rx="3.7" ry="2.7" transform="rotate(97 47.7 181.9)" fill="#c9b060"/><ellipse cx="57.0" cy="182.0" rx="2.5" ry="1.9" transform="rotate(136 57.0 182.0)" fill="#e2b09a"/><ellipse cx="60.5" cy="190.7" rx="2.5" ry="2.1" transform="rotate(80 60.5 190.7)" fill="#e2b09a"/><ellipse cx="59.5" cy="180.8" rx="4.7" ry="4.5" transform="rotate(131 59.5 180.8)" fill="#eab9a8"/><ellipse cx="54.7" cy="186.4" rx="4.0" ry="3.6" transform="rotate(83 54.7 186.4)" fill="#eab9a8"/><ellipse cx="58.6" cy="184.5" rx="3.7" ry="3.1" transform="rotate(136 58.6 184.5)" fill="#eab9a8"/><ellipse cx="37.7" cy="207.2" rx="3.7" ry="3.5" transform="rotate(159 37.7 207.2)" fill="#e2b09a"/><ellipse cx="43.1" cy="207.7" rx="3.9" ry="2.9" transform="rotate(105 43.1 207.7)" fill="#c9b060"/><ellipse cx="43.6" cy="210.3" rx="3.2" ry="2.9" transform="rotate(135 43.6 210.3)" fill="#ebb8a6"/><ellipse cx="43.0" cy="204.9" rx="3.5" ry="3.1" transform="rotate(11 43.0 204.9)" fill="#eab9a8"/><ellipse cx="46.0" cy="206.2" rx="3.3" ry="2.3" transform="rotate(56 46.0 206.2)" fill="#e6c09e"/><ellipse cx="40.0" cy="208.6" rx="2.3" ry="2.0" transform="rotate(98 40.0 208.6)" fill="#e6c09e"/><ellipse cx="42.1" cy="213.3" rx="3.2" ry="2.8" transform="rotate(146 42.1 213.3)" fill="#e2b09a"/><ellipse cx="38.3" cy="210.2" rx="3.8" ry="2.6" transform="rotate(31 38.3 210.2)" fill="#c9b060"/><ellipse cx="15.2" cy="230.5" rx="3.5" ry="3.3" transform="rotate(51 15.2 230.5)" fill="#e2b09a"/><ellipse cx="15.4" cy="229.9" rx="3.5" ry="3.4" transform="rotate(49 15.4 229.9)" fill="#e2b09a"/><ellipse cx="21.9" cy="226.6" rx="3.9" ry="2.5" transform="rotate(2 21.9 226.6)" fill="#efc0ae"/><ellipse cx="24.9" cy="232.3" rx="2.7" ry="1.7" transform="rotate(122 24.9 232.3)" fill="#ebb8a6"/><ellipse cx="25.9" cy="232.9" rx="2.2" ry="1.6" transform="rotate(102 25.9 232.9)" fill="#eab9a8"/><ellipse cx="20.8" cy="230.9" rx="2.3" ry="1.5" transform="rotate(164 20.8 230.9)" fill="#efc0ae"/><ellipse cx="19.6" cy="228.4" rx="3.6" ry="2.6" transform="rotate(111 19.6 228.4)" fill="#ebb8a6"/><ellipse cx="19.6" cy="236.4" rx="3.9" ry="3.2" transform="rotate(136 19.6 236.4)" fill="#c9b060"/><ellipse cx="191.1" cy="368.2" rx="3.0" ry="2.9" transform="rotate(104 191.1 368.2)" fill="#b8a040"/><ellipse cx="194.5" cy="372.0" rx="5.1" ry="4.6" transform="rotate(2 194.5 372.0)" fill="#f0b9a0"/><ellipse cx="188.4" cy="345.2" rx="3.8" ry="2.5" transform="rotate(27 188.4 345.2)" fill="#b8a040"/><ellipse cx="193.0" cy="370.8" rx="4.6" ry="3.8" transform="rotate(22 193.0 370.8)" fill="#e6a690"/><ellipse cx="210.4" cy="366.2" rx="5.0" ry="3.4" transform="rotate(131 210.4 366.2)" fill="#b8a040"/><ellipse cx="184.9" cy="364.4" rx="2.6" ry="1.6" transform="rotate(26 184.9 364.4)" fill="#f0b9a0"/><ellipse cx="203.6" cy="365.6" rx="4.4" ry="3.7" transform="rotate(33 203.6 365.6)" fill="#d7a050"/><ellipse cx="194.4" cy="368.6" rx="4.5" ry="3.4" transform="rotate(119 194.4 368.6)" fill="#c99a40"/><ellipse cx="200.2" cy="355.0" rx="2.8" ry="1.7" transform="rotate(170 200.2 355.0)" fill="#c99a40"/><ellipse cx="184.0" cy="370.3" rx="4.1" ry="3.9" transform="rotate(118 184.0 370.3)" fill="#eeb096"/><ellipse cx="202.3" cy="379.3" rx="4.6" ry="4.1" transform="rotate(123 202.3 379.3)" fill="#d7a050"/><ellipse cx="208.9" cy="360.5" rx="5.2" ry="4.0" transform="rotate(128 208.9 360.5)" fill="#d7a050"/><ellipse cx="188.7" cy="353.7" rx="5.0" ry="5.0" transform="rotate(44 188.7 353.7)" fill="#c99a40"/><ellipse cx="189.4" cy="372.5" rx="4.7" ry="4.3" transform="rotate(15 189.4 372.5)" fill="#b8a040"/><ellipse cx="195.0" cy="370.5" rx="4.6" ry="3.2" transform="rotate(162 195.0 370.5)" fill="#eeb096"/><ellipse cx="200.3" cy="346.5" rx="4.9" ry="3.5" transform="rotate(79 200.3 346.5)" fill="#d7a050"/><ellipse cx="197.2" cy="369.3" rx="2.6" ry="1.7" transform="rotate(120 197.2 369.3)" fill="#d7a050"/><ellipse cx="207.1" cy="360.8" rx="4.4" ry="3.5" transform="rotate(22 207.1 360.8)" fill="#c99a40"/><ellipse cx="194.0" cy="356.5" rx="5.5" ry="4.6" transform="rotate(128 194.0 356.5)" fill="#e6a690"/><ellipse cx="197.3" cy="349.6" rx="3.6" ry="2.5" transform="rotate(64 197.3 349.6)" fill="#f0b9a0"/><ellipse cx="182.9" cy="350.7" rx="4.4" ry="3.6" transform="rotate(117 182.9 350.7)" fill="#f0b9a0"/><ellipse cx="182.6" cy="373.5" rx="5.4" ry="3.3" transform="rotate(120 182.6 373.5)" fill="#b8a040"/><ellipse cx="188.4" cy="376.0" rx="5.3" ry="5.1" transform="rotate(55 188.4 376.0)" fill="#f0b9a0"/><ellipse cx="195.5" cy="374.3" rx="3.2" ry="2.1" transform="rotate(127 195.5 374.3)" fill="#e6a690"/><ellipse cx="189.3" cy="356.4" rx="4.9" ry="4.3" transform="rotate(43 189.3 356.4)" fill="#e6a690"/><ellipse cx="186.4" cy="364.5" rx="4.0" ry="3.8" transform="rotate(52 186.4 364.5)" fill="#f0b9a0"/><ellipse cx="180.6" cy="362.6" rx="5.0" ry="3.1" transform="rotate(149 180.6 362.6)" fill="#b8a040"/><ellipse cx="200.5" cy="348.2" rx="4.8" ry="4.1" transform="rotate(74 200.5 348.2)" fill="#c99a40"/><ellipse cx="192.1" cy="372.8" rx="3.0" ry="2.9" transform="rotate(40 192.1 372.8)" fill="#e6a690"/><ellipse cx="190.9" cy="361.4" rx="4.5" ry="3.6" transform="rotate(5 190.9 361.4)" fill="#eeb096"/><ellipse cx="187.9" cy="351.3" rx="4.1" ry="2.8" transform="rotate(131 187.9 351.3)" fill="#d7a050"/><ellipse cx="184.6" cy="359.3" rx="4.6" ry="3.6" transform="rotate(102 184.6 359.3)" fill="#b8a040"/><ellipse cx="204.5" cy="365.0" rx="3.3" ry="2.1" transform="rotate(119 204.5 365.0)" fill="#c99a40"/><ellipse cx="203.9" cy="363.1" rx="3.4" ry="3.1" transform="rotate(98 203.9 363.1)" fill="#eeb096"/><ellipse cx="189.5" cy="345.8" rx="3.6" ry="3.3" transform="rotate(15 189.5 345.8)" fill="#eeb096"/><ellipse cx="191.9" cy="366.7" rx="3.9" ry="2.7" transform="rotate(165 191.9 366.7)" fill="#d7a050"/><ellipse cx="200.4" cy="352.8" rx="5.2" ry="3.8" transform="rotate(151 200.4 352.8)" fill="#f0b9a0"/><ellipse cx="205.0" cy="366.3" rx="5.0" ry="4.6" transform="rotate(21 205.0 366.3)" fill="#d7a050"/><ellipse cx="209.4" cy="351.0" rx="3.3" ry="3.1" transform="rotate(140 209.4 351.0)" fill="#eeb096"/><ellipse cx="209.4" cy="359.6" rx="5.1" ry="4.7" transform="rotate(139 209.4 359.6)" fill="#c99a40"/><ellipse cx="110.8" cy="321.0" rx="4.2" ry="2.8" transform="rotate(41 110.8 321.0)" fill="#f0b8a8"/><ellipse cx="117.0" cy="323.6" rx="2.7" ry="2.5" transform="rotate(124 117.0 323.6)" fill="#e8c0a8"/><ellipse cx="114.3" cy="313.8" rx="3.3" ry="2.9" transform="rotate(59 114.3 313.8)" fill="#f0b8a8"/><ellipse cx="113.8" cy="321.2" rx="2.8" ry="2.3" transform="rotate(106 113.8 321.2)" fill="#e8c0a8"/><ellipse cx="118.3" cy="317.5" rx="3.8" ry="3.7" transform="rotate(6 118.3 317.5)" fill="#c9a040"/><ellipse cx="120.8" cy="320.9" rx="2.9" ry="1.9" transform="rotate(134 120.8 320.9)" fill="#f0b8a8"/><ellipse cx="124.5" cy="320.1" rx="3.9" ry="3.4" transform="rotate(133 124.5 320.1)" fill="#e8c0a8"/><ellipse cx="112.1" cy="321.7" rx="3.4" ry="3.1" transform="rotate(27 112.1 321.7)" fill="#c9a040"/><ellipse cx="108.5" cy="319.9" rx="3.9" ry="2.9" transform="rotate(148 108.5 319.9)" fill="#f0b8a8"/><ellipse cx="115.9" cy="318.5" rx="4.3" ry="3.5" transform="rotate(109 115.9 318.5)" fill="#e8c0a8"/><ellipse cx="120.8" cy="317.9" rx="2.9" ry="1.9" transform="rotate(61 120.8 317.9)" fill="#eaa898"/><ellipse cx="114.7" cy="317.1" rx="3.4" ry="2.1" transform="rotate(112 114.7 317.1)" fill="#f0b8a8"/><ellipse cx="121.4" cy="324.0" rx="4.0" ry="2.4" transform="rotate(117 121.4 324.0)" fill="#f0b8a8"/><ellipse cx="115.9" cy="318.4" rx="3.0" ry="2.7" transform="rotate(113 115.9 318.4)" fill="#eaa898"/><ellipse cx="142.4" cy="385.5" rx="2.4" ry="1.7" transform="rotate(133 142.4 385.5)" fill="#c9a040"/><ellipse cx="142.1" cy="385.6" rx="2.1" ry="1.5" transform="rotate(108 142.1 385.6)" fill="#a88830"/><ellipse cx="141.6" cy="381.3" rx="2.6" ry="2.1" transform="rotate(50 141.6 381.3)" fill="#c9a040"/><ellipse cx="143.1" cy="384.0" rx="2.6" ry="1.9" transform="rotate(39 143.1 384.0)" fill="#d0b050"/><ellipse cx="146.6" cy="388.0" rx="2.5" ry="1.9" transform="rotate(48 146.6 388.0)" fill="#c9a040"/><ellipse cx="142.3" cy="381.9" rx="3.5" ry="2.6" transform="rotate(99 142.3 381.9)" fill="#d0b050"/><ellipse cx="137.3" cy="383.7" rx="2.1" ry="1.4" transform="rotate(52 137.3 383.7)" fill="#c9a040"/><ellipse cx="147.5" cy="381.7" rx="2.6" ry="2.0" transform="rotate(150 147.5 381.7)" fill="#a88830"/><ellipse cx="140.9" cy="387.7" rx="2.4" ry="2.3" transform="rotate(117 140.9 387.7)" fill="#a88830"/><ellipse cx="139.6" cy="385.5" rx="2.7" ry="1.9" transform="rotate(167 139.6 385.5)" fill="#a88830"/><ellipse cx="140.1" cy="381.0" rx="3.2" ry="2.2" transform="rotate(6 140.1 381.0)" fill="#d0b050"/><ellipse cx="141.7" cy="386.7" rx="3.4" ry="2.8" transform="rotate(129 141.7 386.7)" fill="#a88830"/><ellipse cx="217.7" cy="421.9" rx="2.2" ry="1.7" transform="rotate(121 217.7 421.9)" fill="#c9a040"/><ellipse cx="209.2" cy="421.9" rx="2.0" ry="1.6" transform="rotate(67 209.2 421.9)" fill="#6e7a40"/><ellipse cx="212.1" cy="421.1" rx="2.2" ry="1.4" transform="rotate(28 212.1 421.1)" fill="#a08030"/><ellipse cx="209.1" cy="419.5" rx="3.2" ry="2.6" transform="rotate(91 209.1 419.5)" fill="#a08030"/><ellipse cx="212.3" cy="421.1" rx="2.1" ry="2.0" transform="rotate(151 212.3 421.1)" fill="#d0b050"/><ellipse cx="212.8" cy="422.1" rx="2.9" ry="2.9" transform="rotate(146 212.8 422.1)" fill="#c9a040"/><ellipse cx="216.7" cy="424.2" rx="3.2" ry="3.1" transform="rotate(60 216.7 424.2)" fill="#6e7a40"/><ellipse cx="215.7" cy="427.9" rx="3.2" ry="2.0" transform="rotate(106 215.7 427.9)" fill="#d0b050"/><ellipse cx="212.4" cy="412.2" rx="2.1" ry="2.1" transform="rotate(119 212.4 412.2)" fill="#d0b050"/><ellipse cx="207.8" cy="420.3" rx="3.4" ry="3.0" transform="rotate(7 207.8 420.3)" fill="#6e7a40"/><ellipse cx="211.9" cy="418.7" rx="2.2" ry="1.4" transform="rotate(120 211.9 418.7)" fill="#a08030"/><ellipse cx="210.4" cy="417.8" rx="3.0" ry="2.3" transform="rotate(106 210.4 417.8)" fill="#a08030"/><ellipse cx="218.6" cy="420.1" rx="3.5" ry="2.3" transform="rotate(132 218.6 420.1)" fill="#d0b050"/><ellipse cx="216.0" cy="424.6" rx="2.4" ry="2.2" transform="rotate(82 216.0 424.6)" fill="#d0b050"/><ellipse cx="215.1" cy="415.6" rx="3.1" ry="2.0" transform="rotate(37 215.1 415.6)" fill="#6e7a40"/><ellipse cx="215.0" cy="429.0" rx="2.6" ry="2.2" transform="rotate(74 215.0 429.0)" fill="#d0b050"/></g><g fill="#161616" transform="translate(4,3)">
<path d="M268,130 Q277,127 283,130 Q277,133 268,131 Z"/>
<path d="M272,117 Q280,121 286,126 Q279,125 271,119 Z"/>
<path d="M284,106 Q290,113 292,121 Q287,116 283,108 Z"/>
</g><g transform="translate(-21,-184)" fill="none" stroke="#1a1a1a" stroke-linecap="round"><path d="M315.4,331.8 C313.3,326.6 315.4,323.1 320.5,322 C326.6,321 330,321 331.5,320 M340.5,310.8 C330.7,315.4 325.1,330.7 327.2,346.1 C328.7,354.3 334.8,356.4 338.9,354.8 C348.2,351.2 356.4,338.9 355.9,326.6 C355.3,315.4 351.2,311.3 347.1,311.8 C342,312.8 339.5,320.5 340,330.7 C340.5,341 344.1,345.1 351.2,345.1 C358.4,345.1 364.6,340 368.2,335.4" stroke-width="1.1"/><path d="M334,314.5 C328,320 325,332 326.5,345" stroke-width="2.4"/><g transform="translate(0,0)"><path d="M376.9,334.8 C376,329 380,325 386,325 C392,325 395,331 393,335.5 C391,338 386,336 386,330 C386,320 392,311 398,311 C403,311 405,316 404.5,325.6 M404,322 C408,314 415,310 421,311.3 C426,312.5 426,322 423,330.7 C420,337 414,341 411,340 C408,339 409,336 413,336.5 C420,337.5 430,339 440,338" stroke-width="1.1"/><path d="M404.8,318 C403.5,330 401.8,344 400.4,354.3" stroke-width="2.6"/></g><g transform="translate(150,0)"><path d="M376.9,334.8 C376,329 380,325 386,325 C392,325 395,331 393,335.5 C391,338 386,336 386,330 C386,320 392,311 398,311 C403,311 405,316 404.5,325.6 M404,322 C408,314 415,310 421,311.3 C426,312.5 426,322 423,330.7 C420,337 414,341 411,340 C408,339 409,336 413,336.5 C420,337.5 430,339 440,338" stroke-width="1.1"/><path d="M404.8,318 C403.5,330 401.8,344 400.4,354.3" stroke-width="2.6"/></g><g transform="translate(15.4,45)"><path d="M376.9,334.8 C376,329 380,325 386,325 C392,325 395,331 393,335.5 C391,338 386,336 386,330 C386,320 392,311 398,311 C403,311 405,316 404.5,325.6 M404,322 C408,314 415,310 421,311.3 C426,312.5 426,322 423,330.7 C420,337 414,341 411,340 C408,339 409,336 413,336.5 C420,337.5 430,339 440,338" stroke-width="1.1"/><path d="M404.8,318 C403.5,330 401.8,344 400.4,354.3" stroke-width="2.6"/></g></g><text x="411" y="162" font-family="Liberation Serif" font-style="italic" fill="#1a1a1a" stroke="#fefdf3" stroke-width="0.75" font-size="38" textLength="86" lengthAdjust="spacingAndGlyphs">rojeto</text><text x="561" y="162" font-family="Liberation Serif" font-style="italic" fill="#1a1a1a" stroke="#fefdf3" stroke-width="0.75" font-size="38" textLength="99" lengthAdjust="spacingAndGlyphs">olitico</text><text x="429" y="206" font-family="Liberation Serif" font-style="italic" fill="#1a1a1a" stroke="#fefdf3" stroke-width="0.75" font-size="38" textLength="151" lengthAdjust="spacingAndGlyphs">edagógico:</text><text x="349.5" y="252" font-family="Liberation Serif" font-style="italic" fill="#1a1a1a" stroke="#fefdf3" stroke-width="0.75" font-size="42" textLength="251" lengthAdjust="spacingAndGlyphs">a vida da escola!</text><rect x="316.6" y="316.5" width="63" height="2.2" fill="#111"/><rect x="421.4" y="316.5" width="64" height="2.2" fill="#111"/><text x="283.6" y="336.3" font-family="Liberation Sans" font-size="14.5" fill="#111" stroke="#111" stroke-width="0.45" textLength="251.7" lengthAdjust="spacing">PROF.ª FABRICIA SONEGO</text><text x="243.5" y="353.7" font-family="Liberation Sans" font-size="14.5" fill="#111" stroke="#111" stroke-width="0.45" textLength="333.7" lengthAdjust="spacing">INSTITUTO FEDERAL FARROUPILHA</text><path d="M724.2,134.2 L724.2,144.4 L727,141.6 L729,145 L730.5,144 L728.8,141 L731.7,141.6 Z" fill="#fff" stroke="#222" stroke-width="1"/></svg>
<div class="a" style="left:847px;top:199px;width:160px;height:133px;border-radius:8px;background:#3c4043"></div>
<div class="a" style="left:1019px;top:199px;width:160px;height:133px;border-radius:8px;background:#3c4043"></div>
<div class="a" style="left:1191px;top:199px;width:159px;height:133px;border-radius:8px;background:#3c4043"></div>
<div class="a" style="left:847px;top:344px;width:160px;height:134px;border-radius:8px;background:#3c4043"></div>
<div class="a" style="left:1019px;top:344px;width:160px;height:134px;border-radius:8px;background:#3c4043"></div>
<div class="a" style="left:1191px;top:344px;width:159px;height:134px;border-radius:8px;background:#3c4043"></div>
<div class="a" style="left:847px;top:490px;width:160px;height:133px;border-radius:8px;background:#3c4043"></div>
<div class="a" style="left:1019px;top:490px;width:160px;height:133px;border-radius:8px;background:#3c4043"></div>
<div class="a" style="left:1191px;top:490px;width:159px;height:133px;border-radius:8px;background:#3c4043"></div>
<svg style="left:847px;top:199px" width="160" height="133" viewBox="0 0 160 133">
<defs><clipPath id="c1"><rect x="0" y="0" width="160" height="133" rx="8"/></clipPath>
<filter id="b1" x="-20%" y="-20%" width="140%" height="140%"><feGaussianBlur stdDeviation="2.2"/></filter>
<filter id="b1s" x="-20%" y="-20%" width="140%" height="140%"><feGaussianBlur stdDeviation="1"/></filter>
<linearGradient id="wall1" x1="0" y1="0" x2="1" y2="0"><stop offset="0" stop-color="#c9c9c9"/><stop offset="0.6" stop-color="#d7d7da"/><stop offset="1" stop-color="#cfcfd4"/></linearGradient>
<linearGradient id="door1" x1="0" y1="0" x2="1" y2="0"><stop offset="0" stop-color="#a87a30"/><stop offset="0.5" stop-color="#c58e3a"/><stop offset="1" stop-color="#b27f36"/></linearGradient>
</defs>
<g clip-path="url(#c1)">
<rect width="160" height="133" fill="url(#wall1)"/>
<g filter="url(#b1s)">
<rect x="8" y="24" width="70" height="112" fill="#6c5330"/>
<rect x="11" y="27" width="64" height="110" fill="url(#door1)"/>
</g>
<g filter="url(#b1)">
<path d="M58,133 Q54,90 60,55 Q66,24 92,22 Q122,22 130,50 Q138,85 140,133 Z" fill="#3d2e29"/>
<ellipse cx="91" cy="70" rx="25" ry="37" fill="#c2a299"/>
<ellipse cx="93" cy="54" rx="18" ry="13" fill="#ccb0a6"/>
<ellipse cx="78" cy="60" rx="5.5" ry="2.6" fill="#4e3a38"/><ellipse cx="104" cy="59" rx="5.5" ry="2.6" fill="#4e3a38"/>
<ellipse cx="87" cy="84" rx="8" ry="4" fill="#5e3c3a"/><ellipse cx="87" cy="82.5" rx="5" ry="1.3" fill="#d8c8c0"/>
<path d="M-2,133 L2,120 Q14,100 40,96 Q58,96 66,104 L70,133 Z" fill="#38334c"/>
<path d="M118,106 Q140,100 158,112 L162,133 L118,133 Z" fill="#3d3852"/>
<path d="M66,104 Q90,122 120,106 L124,133 L66,133 Z" fill="#2a2434"/>
</g>
</g>
<rect x="2" y="2" width="156" height="129" rx="7" fill="none" stroke="#6d9ef0" stroke-width="4"/>
</svg>
<div class="a" style="left:969px;top:211px;width:26px;height:26px;border-radius:50%;background:#1a73e8"></div>
<svg style="left:974px;top:216px" width="16" height="16"><rect x="1.5" y="5" width="3" height="6" rx="1.5" fill="#fff"/><rect x="6.5" y="2.5" width="3" height="11" rx="1.5" fill="#fff"/><rect x="11.5" y="5" width="3" height="6" rx="1.5" fill="#fff"/></svg>
<div class="t" style="left:863.00px;top:303.65px;font-size:13px;font-weight:bold;font-family:'Liberation Sans', sans-serif;line-height:13px;color:#fff;letter-spacing:0.347px;text-shadow:0 0 2px rgba(0,0,0,0.35);">Fabricia Sônego</div>
<svg style="left:847px;top:344px" width="160" height="134" viewBox="0 0 160 134">
<defs><clipPath id="c4"><rect x="0" y="0" width="160" height="134" rx="8"/></clipPath>
<filter id="b4" x="-20%" y="-20%" width="140%" height="140%"><feGaussianBlur stdDeviation="1.8"/></filter>
<filter id="b4s" x="-20%" y="-20%" width="140%" height="140%"><feGaussianBlur stdDeviation="0.8"/></filter>
</defs>
<g clip-path="url(#c4)">
<rect width="160" height="134" fill="#d3d3d8"/>
<rect x="0" y="0" width="30" height="134" fill="#c5c5ca"/>
<g filter="url(#b4s)">
<rect x="0" y="0" width="24" height="24" fill="#5a2a28"/>
<rect x="68" y="0" width="18" height="5" fill="#5a2a28"/>
<path d="M105,24 L106,46 M118,25 L117,46 M143,14 L142,46" stroke="#151515" stroke-width="2.6"/>
<rect x="104" y="42" width="42" height="6" rx="2" fill="#1a1a1a"/>
<path d="M95,52 L150,48 L150,55 L95,57 Z" fill="#f4f4f4"/>
<rect x="136" y="57" width="6" height="65" fill="#ececec"/>
<circle cx="121" cy="62" r="4.5" fill="#b01e28"/>
<path d="M121,66 L125,110" stroke="#4a5a3a" stroke-width="1.6"/>
<path d="M115,78 Q120,72 126,78 Q122,84 115,78 Z M130,75 Q135,72 134,80 Q128,82 130,75 Z" fill="#3e4a3a"/>
<ellipse cx="128" cy="90" rx="4" ry="6" fill="#9a1e28"/>
<rect x="115" y="108" width="22" height="20" fill="#4a3a30"/>
<rect x="142" y="98" width="18" height="26" rx="4" fill="#cfb040"/>
<rect x="95" y="120" width="70" height="14" fill="#6a5a4a"/>
<rect x="100" y="124" width="60" height="10" fill="#2e2e2e"/>
</g>
<g filter="url(#b4)">
<path d="M-4,134 L-4,60 Q4,30 36,28 Q66,27 74,48 Q80,70 78,100 Q80,120 72,134 Z" fill="#352220"/>
<ellipse cx="70" cy="40" rx="7" ry="8" fill="#1e1414"/>
<path d="M8,72 Q10,52 38,50 Q64,50 66,72 Q68,100 58,118 Q48,128 36,128 Q22,128 14,116 Q6,100 8,72 Z" fill="#cfb0a3"/>
<ellipse cx="23" cy="79" rx="11" ry="7" stroke="#2e2020" stroke-width="2.8" fill="none"/>
<ellipse cx="51" cy="79" rx="11" ry="7" stroke="#2e2020" stroke-width="2.8" fill="none"/>
<ellipse cx="36" cy="106" rx="8" ry="3" fill="#a87c74"/>
<path d="M0,104 Q12,110 16,134 L-2,134 Z" fill="#e2cabd"/>
<path d="M14,124 Q36,132 58,120 L62,134 L14,134 Z" fill="#dcc4b8"/>
<path d="M56,114 Q76,116 96,134 L54,134 Z" fill="#7a2a2e"/>
</g>
</g></svg>
<div class="a" style="left:970px;top:356px;width:24px;height:24px;border-radius:50%;background:rgba(95,99,104,0.55)"></div>
<svg style="left:974px;top:360px" width="16" height="16" viewBox="0 0 16 16"><path d="M6.2,4 Q6.2,1.5 8,1.5 Q9.8,1.5 9.8,4 L9.8,7.5 Q9.8,9.8 8,9.8 Q6.2,9.8 6.2,7.5 Z" fill="#fff"/><path d="M4,7.5 Q4,11.5 8,11.5 Q12,11.5 12,7.5" stroke="#fff" stroke-width="1.3" fill="none"/><path d="M8,11.5 L8,14.5" stroke="#fff" stroke-width="1.4"/><path d="M2.5,2.5 L13.5,13.5" stroke="#3c4043" stroke-width="2.6"/><path d="M2.5,2.5 L13.5,13.5" stroke="#fff" stroke-width="1.3"/></svg>
<div class="t" style="left:863.00px;top:449.25px;font-size:13px;font-weight:bold;font-family:'Liberation Sans', sans-serif;line-height:13px;color:#fff;letter-spacing:0.350px;text-shadow:0 0 2px rgba(0,0,0,0.35);">Elizete Vargas</div>
<div class="a" style="left:1075px;top:242px;width:48px;height:48px;border-radius:50%;background:#12897d"></div>
<div class="a" style="left:1098px;top:256px;width:2px;height:20px;background:#fff"></div>
<div class="a" style="left:1142px;top:211px;width:24px;height:24px;border-radius:50%;background:rgba(32,33,36,0.55)"></div>
<svg style="left:1146px;top:215px" width="16" height="16" viewBox="0 0 16 16"><path d="M6.2,4 Q6.2,1.5 8,1.5 Q9.8,1.5 9.8,4 L9.8,7.5 Q9.8,9.8 8,9.8 Q6.2,9.8 6.2,7.5 Z" fill="#fff"/><path d="M4,7.5 Q4,11.5 8,11.5 Q12,11.5 12,7.5" stroke="#fff" stroke-width="1.3" fill="none"/><path d="M8,11.5 L8,14.5" stroke="#fff" stroke-width="1.4"/><path d="M2.5,2.5 L13.5,13.5" stroke="#3c4043" stroke-width="2.6"/><path d="M2.5,2.5 L13.5,13.5" stroke="#fff" stroke-width="1.3"/></svg>
<div class="t" style="left:1035.50px;top:303.65px;font-size:13px;font-weight:bold;font-family:'Liberation Sans', sans-serif;line-height:13px;color:#fff;letter-spacing:0.421px;text-shadow:0 0 2px rgba(0,0,0,0.35);">Irene deOliveira ...</div>
<svg style="left:1247px;top:242px" width="48" height="48" viewBox="0 0 48 48"><defs><clipPath id="av3"><circle cx="24" cy="24" r="24"/></clipPath><filter id="bav"><feGaussianBlur stdDeviation="1"/></filter></defs>
<g clip-path="url(#av3)" filter="url(#bav)"><rect width="48" height="48" fill="#c8c8c8"/><path d="M6,40 Q2,20 12,10 Q24,2 36,8 Q46,18 44,34 Q42,42 36,44 L12,44 Z" fill="#1c1412"/><ellipse cx="28" cy="22" rx="9.5" ry="12" fill="#d8aea0"/><path d="M18,16 Q26,6 38,14 L36,10 Q26,2 16,12 Z" fill="#1c1412"/><path d="M4,48 Q24,34 46,48 Z" fill="#ece8e4"/><path d="M22,27 Q28,31 34,27" stroke="#fff" stroke-width="1.8" fill="none"/></g></svg>
<div class="a" style="left:1312px;top:211px;width:24px;height:24px;border-radius:50%;background:rgba(32,33,36,0.55)"></div>
<svg style="left:1316px;top:215px" width="16" height="16" viewBox="0 0 16 16"><path d="M6.2,4 Q6.2,1.5 8,1.5 Q9.8,1.5 9.8,4 L9.8,7.5 Q9.8,9.8 8,9.8 Q6.2,9.8 6.2,7.5 Z" fill="#fff"/><path d="M4,7.5 Q4,11.5 8,11.5 Q12,11.5 12,7.5" stroke="#fff" stroke-width="1.3" fill="none"/><path d="M8,11.5 L8,14.5" stroke="#fff" stroke-width="1.4"/><path d="M2.5,2.5 L13.5,13.5" stroke="#3c4043" stroke-width="2.6"/><path d="M2.5,2.5 L13.5,13.5" stroke="#fff" stroke-width="1.3"/></svg>
<div class="t" style="left:1207.50px;top:303.65px;font-size:13px;font-weight:bold;font-family:'Liberation Sans', sans-serif;line-height:13px;color:#fff;letter-spacing:0.119px;text-shadow:0 0 2px rgba(0,0,0,0.35);">MANUELE VARG...</div>
<svg style="left:1074px;top:387px" width="48" height="48" viewBox="0 0 48 48"><defs><clipPath id="av5"><circle cx="24" cy="24" r="24"/></clipPath></defs>
<g clip-path="url(#av5)" filter="url(#bav)"><rect width="48" height="48" fill="#5c5c5c"/><path d="M2,48 Q0,20 8,12 Q14,7 20,12 Q25,18 24,34 Q26,44 24,48 Z" fill="#221614"/><ellipse cx="14" cy="29" rx="9.5" ry="12" fill="#e2c2b6"/><path d="M24,48 Q22,22 28,14 Q36,8 44,14 Q48,22 46,36 L46,48 Z" fill="#2e2220"/><ellipse cx="35.5" cy="28" rx="9" ry="11.5" fill="#dcbcae"/><path d="M26,42 Q36,38 48,42 L48,48 L26,48 Z" fill="#e6e2de"/><path d="M10,35 Q14,37 18,35 M32,34 Q36,36 40,34" stroke="#fff" stroke-width="1.2" fill="none"/></g></svg>
<div class="a" style="left:1142px;top:356px;width:24px;height:24px;border-radius:50%;background:rgba(32,33,36,0.55)"></div>
<svg style="left:1146px;top:360px" width="16" height="16" viewBox="0 0 16 16"><path d="M6.2,4 Q6.2,1.5 8,1.5 Q9.8,1.5 9.8,4 L9.8,7.5 Q9.8,9.8 8,9.8 Q6.2,9.8 6.2,7.5 Z" fill="#fff"/><path d="M4,7.5 Q4,11.5 8,11.5 Q12,11.5 12,7.5" stroke="#fff" stroke-width="1.3" fill="none"/><path d="M8,11.5 L8,14.5" stroke="#fff" stroke-width="1.4"/><path d="M2.5,2.5 L13.5,13.5" stroke="#3c4043" stroke-width="2.6"/><path d="M2.5,2.5 L13.5,13.5" stroke="#fff" stroke-width="1.3"/></svg>
<div class="t" style="left:1035.60px;top:449.25px;font-size:13px;font-weight:bold;font-family:'Liberation Sans', sans-serif;line-height:13px;color:#fff;letter-spacing:0.222px;text-shadow:0 0 2px rgba(0,0,0,0.35);">PATRICIA NUNES</div>
<svg style="left:1246px;top:387px" width="48" height="48" viewBox="0 0 48 48"><defs><clipPath id="av6"><circle cx="24" cy="24" r="24"/></clipPath></defs>
<g clip-path="url(#av6)" filter="url(#bav)"><rect width="48" height="48" fill="#e6c8b4"/><path d="M0,0 L48,0 L48,12 Q24,8 0,22 Z" fill="#f0dccc"/><path d="M0,22 Q8,18 16,20 L14,48 L0,48 Z" fill="#dcdad8"/><circle cx="33" cy="21" r="4.5" fill="#fff8e8"/><rect x="31" y="24" width="11" height="22" fill="#8a6a58"/><path d="M42,0 L48,0 L48,40 Q44,30 42,0 Z" fill="#e8d0c8"/><ellipse cx="21" cy="31" rx="4.5" ry="7" fill="#3e2822"/><ellipse cx="22" cy="32" rx="2.5" ry="4" fill="#d8b8a8"/><path d="M12,48 Q14,38 20,38 Q27,38 28,48 Z" fill="#c8e0e6"/></g></svg>
<div class="a" style="left:1312px;top:356px;width:24px;height:24px;border-radius:50%;background:rgba(32,33,36,0.55)"></div>
<svg style="left:1316px;top:360px" width="16" height="16" viewBox="0 0 16 16"><path d="M6.2,4 Q6.2,1.5 8,1.5 Q9.8,1.5 9.8,4 L9.8,7.5 Q9.8,9.8 8,9.8 Q6.2,9.8 6.2,7.5 Z" fill="#fff"/><path d="M4,7.5 Q4,11.5 8,11.5 Q12,11.5 12,7.5" stroke="#fff" stroke-width="1.3" fill="none"/><path d="M8,11.5 L8,14.5" stroke="#fff" stroke-width="1.4"/><path d="M2.5,2.5 L13.5,13.5" stroke="#3c4043" stroke-width="2.6"/><path d="M2.5,2.5 L13.5,13.5" stroke="#fff" stroke-width="1.3"/></svg>
<div class="t" style="left:1206.70px;top:449.25px;font-size:13px;font-weight:bold;font-family:'Liberation Sans', sans-serif;line-height:13px;color:#fff;letter-spacing:0.378px;text-shadow:0 0 2px rgba(0,0,0,0.35);">cris Pereira</div>
<div class="a" style="left:903px;top:533px;width:48px;height:48px;border-radius:50%;background:#f4511e"></div>
<div class="t" style="left:917.00px;top:544.90px;font-size:26px;font-weight:normal;font-family:'Liberation Sans', sans-serif;line-height:26px;color:#fff;">E</div>
<div class="a" style="left:970px;top:502px;width:24px;height:24px;border-radius:50%;background:rgba(32,33,36,0.55)"></div>
<svg style="left:974px;top:506px" width="16" height="16" viewBox="0 0 16 16"><path d="M6.2,4 Q6.2,1.5 8,1.5 Q9.8,1.5 9.8,4 L9.8,7.5 Q9.8,9.8 8,9.8 Q6.2,9.8 6.2,7.5 Z" fill="#fff"/><path d="M4,7.5 Q4,11.5 8,11.5 Q12,11.5 12,7.5" stroke="#fff" stroke-width="1.3" fill="none"/><path d="M8,11.5 L8,14.5" stroke="#fff" stroke-width="1.4"/><path d="M2.5,2.5 L13.5,13.5" stroke="#3c4043" stroke-width="2.6"/><path d="M2.5,2.5 L13.5,13.5" stroke="#fff" stroke-width="1.3"/></svg>
<div class="t" style="left:863.50px;top:594.45px;font-size:13px;font-weight:bold;font-family:'Liberation Sans', sans-serif;line-height:13px;color:#fff;letter-spacing:0.057px;text-shadow:0 0 2px rgba(0,0,0,0.35);">EMEB LUIZA ARA...</div>
<svg style="left:1069px;top:525px" width="64" height="33" viewBox="0 0 64 33"><defs><clipPath id="av8"><circle cx="16" cy="16.5" r="16"/></clipPath><clipPath id="av9"><circle cx="46" cy="16.5" r="16"/></clipPath></defs>
<g clip-path="url(#av8)" filter="url(#bav)"><rect width="40" height="33" fill="#9a9a9a"/><path d="M6,33 Q4,12 14,5 Q24,0 30,8 Q34,16 32,33 Z" fill="#5a3c2a"/><ellipse cx="21" cy="20" rx="9" ry="11" fill="#d9b2a2"/><path d="M12,12 Q18,4 30,10 L28,14 Q20,8 12,16 Z" fill="#5a3c2a"/></g>
<g clip-path="url(#av9)"><circle cx="46" cy="16.5" r="16" fill="#a88010"/><circle cx="46" cy="16.5" r="14.5" fill="#e0b430"/><circle cx="46" cy="16.5" r="12" fill="#1e1a08"/><ellipse cx="46" cy="16.5" rx="10.5" ry="7" fill="#e8c040"/><path d="M36,16.5 L56,16.5" stroke="#f4d870" stroke-width="3"/><circle cx="46" cy="27" r="2.5" fill="#c9a040"/></g></svg>
<div class="t" style="left:1045.00px;top:571.10px;font-size:14px;font-weight:normal;font-family:'Liberation Sans', sans-serif;line-height:14px;color:#e8eaed;letter-spacing:0.210px;-webkit-text-stroke:0.35px #e8eaed;">Mais 36 pessoas</div>
<svg style="left:1191px;top:510px" width="159" height="92" viewBox="0 0 159 92">
<defs><filter id="b9" x="-20%" y="-20%" width="140%" height="140%"><feGaussianBlur stdDeviation="1.8"/></filter>
<filter id="b9s" x="-20%" y="-20%" width="140%" height="140%"><feGaussianBlur stdDeviation="0.8"/></filter>
<linearGradient id="wall9" x1="0" y1="0" x2="0" y2="1"><stop offset="0" stop-color="#cdcdcd"/><stop offset="1" stop-color="#bdbdbd"/></linearGradient></defs>
<rect width="159" height="92" fill="url(#wall9)"/>
<g filter="url(#b9s)">
<rect x="110" y="48" width="49" height="44" fill="#a8a8a8"/>
<rect x="120" y="70" width="20" height="22" fill="#d0d4d6"/>
<rect x="125" y="75" width="6" height="17" fill="#5a8a88"/>
<rect x="0" y="52" width="42" height="5" fill="#b8a890"/>
<rect x="2" y="56" width="40" height="14" fill="#6a6a70"/>
<rect x="0" y="70" width="42" height="4" fill="#b8a890"/>
<rect x="2" y="74" width="40" height="16" fill="#4a6a8a"/>
<rect x="8" y="74" width="4" height="16" fill="#8ab0c8"/><rect x="16" y="74" width="5" height="16" fill="#3a5a7a"/><rect x="26" y="74" width="6" height="16" fill="#9ac0d0"/>
<path d="M3,0 L8,10" stroke="#333" stroke-width="1.2"/>
</g>
<g filter="url(#b9)">
<path d="M40,92 Q42,55 50,30 Q60,9 78,10 Q98,10 106,32 Q113,60 114,92 Z" fill="#2e2422"/>
<ellipse cx="77" cy="54" rx="23" ry="31" fill="#dcc6bc"/>
<path d="M56,24 Q70,14 90,20 Q100,26 102,38 Q90,26 70,26 Q60,28 54,38 Z" fill="#2e2422"/>
<ellipse cx="66" cy="49" rx="8" ry="4.5" stroke="#c8c8c8" stroke-width="1.3" fill="none"/>
<ellipse cx="88" cy="49" rx="8" ry="4.5" stroke="#c8c8c8" stroke-width="1.3" fill="none"/>
<ellipse cx="66" cy="49" rx="3" ry="1.5" fill="#6a5a58"/><ellipse cx="88" cy="49" rx="3" ry="1.5" fill="#6a5a58"/>
<ellipse cx="77" cy="73" rx="6" ry="1.8" fill="#a88078"/>
<path d="M36,92 Q50,80 66,84 Q77,88 90,84 Q106,80 118,92 Z" fill="#262020"/>
</g>
</svg>
<div class="a" style="left:1312px;top:502px;width:24px;height:24px;border-radius:50%;background:rgba(95,99,104,0.6)"></div>
<svg style="left:1316px;top:506px" width="16" height="16" viewBox="0 0 16 16"><path d="M6.2,4 Q6.2,1.5 8,1.5 Q9.8,1.5 9.8,4 L9.8,7.5 Q9.8,9.8 8,9.8 Q6.2,9.8 6.2,7.5 Z" fill="#fff"/><path d="M4,7.5 Q4,11.5 8,11.5 Q12,11.5 12,7.5" stroke="#fff" stroke-width="1.3" fill="none"/><path d="M8,11.5 L8,14.5" stroke="#fff" stroke-width="1.4"/><path d="M2.5,2.5 L13.5,13.5" stroke="#3c4043" stroke-width="2.6"/><path d="M2.5,2.5 L13.5,13.5" stroke="#fff" stroke-width="1.3"/></svg>
<div class="t" style="left:1207.00px;top:594.65px;font-size:13px;font-weight:bold;font-family:'Liberation Sans', sans-serif;line-height:13px;color:#fff;letter-spacing:0.429px;text-shadow:0 0 2px rgba(0,0,0,0.35);">Calinca Pergher</div>
<div class="t" style="left:24.20px;top:673.08px;font-size:15.2px;font-weight:bold;font-family:'Liberation Sans', sans-serif;line-height:15.2px;color:#fff;letter-spacing:-0.065px;">09:17</div>
<div class="a" style="left:76px;top:672px;width:1px;height:16px;background:#e8eaed"></div>
<div class="t" style="left:88.50px;top:673.08px;font-size:15.2px;font-weight:bold;font-family:'Liberation Sans', sans-serif;line-height:15.2px;color:#fff;letter-spacing:0.577px;">zyq-usio-qap</div>
<div class="a" style="left:473px;top:660px;width:40px;height:40px;border-radius:50%;background:#ea4335"></div>
<svg style="left:483px;top:670px" width="20" height="20" viewBox="0 0 20 20"><path d="M8,4 Q8,1.5 10,1.5 Q12,1.5 12,4 L12,10 Q12,12.5 10,12.5 Q8,12.5 8,10 Z" fill="#fff"/><path d="M5.5,9.5 Q5.5,14 10,14 Q14.5,14 14.5,9.5" stroke="#fff" stroke-width="1.6" fill="none"/><path d="M10,14 L10,17.5" stroke="#fff" stroke-width="1.8"/><path d="M4,3 L16,17" stroke="#ea4335" stroke-width="3"/><path d="M4,3 L16,17" stroke="#fff" stroke-width="1.6"/></svg>
<div class="a" style="left:525px;top:660px;width:40px;height:40px;border-radius:50%;background:#3c4043"></div>
<svg style="left:535px;top:670px" width="20" height="20"><rect x="1.5" y="4.2" width="12" height="11.6" rx="1.2" stroke="#fff" stroke-width="2.2" fill="none"/><path d="M13.5,8.3 L18.5,4.8 L18.5,15.2 L13.5,11.7 Z" fill="#fff"/></svg>
<div class="a" style="left:577px;top:660px;width:40px;height:40px;border-radius:50%;background:#3c4043"></div>
<svg style="left:587px;top:670px" width="20" height="20"><rect x="1.2" y="3.5" width="17.6" height="13" rx="1" stroke="#fff" stroke-width="2.2" fill="none"/><path d="M8.8,7.8 L5,7.8 L5,12.2 L8.8,12.2 M15.2,7.8 L11.4,7.8 L11.4,12.2 L15.2,12.2" stroke="#fff" stroke-width="1.9" fill="none"/></svg>
<div class="a" style="left:629px;top:660px;width:40px;height:40px;border-radius:50%;background:#3c4043"></div>
<svg style="left:638px;top:669px" width="22" height="22"><circle cx="11" cy="11" r="9.4" stroke="#fff" stroke-width="2.2" fill="none"/><circle cx="7.8" cy="8.6" r="1.5" fill="#fff"/><circle cx="14.2" cy="8.6" r="1.5" fill="#fff"/><path d="M6.3,12 L15.7,12 Q15.2,16.2 11,16.2 Q6.8,16.2 6.3,12 Z" fill="#fff"/></svg>
<div class="a" style="left:681px;top:660px;width:40px;height:40px;border-radius:50%;background:#3c4043"></div>
<svg style="left:689px;top:669px" width="24" height="22"><rect x="1.2" y="3.2" width="21.6" height="15.6" rx="1" stroke="#fff" stroke-width="2.2" fill="none"/><path d="M12,6.8 L16.3,11.2 L13.6,11.2 L13.6,14.5 L10.4,14.5 L10.4,11.2 L7.7,11.2 Z" fill="#fff"/></svg>
<div class="a" style="left:733px;top:660px;width:40px;height:40px;border-radius:50%;background:#3c4043"></div>
<svg style="left:743px;top:669px" width="20" height="22" viewBox="0 0 20 22"><path d="M5,11 L5,4 Q5,2.5 6.3,2.5 Q7.5,2.5 7.5,4 L7.5,10 L7.5,2.5 Q7.5,1 8.8,1 Q10,1 10,2.5 L10,10 L10,3 Q10,1.6 11.3,1.6 Q12.5,1.6 12.5,3 L12.5,10 L12.5,5 Q12.5,3.6 13.8,3.6 Q15,3.6 15,5 L15,13 Q15,20 9.5,20 Q6,20 4.5,17 L2,12 Q1.5,10.5 2.8,10.2 Q4,10 5,11.5 Z" stroke="#fff" stroke-width="1.9" fill="none" stroke-linejoin="round"/></svg>
<div class="a" style="left:785px;top:660px;width:40px;height:40px;border-radius:50%;background:#3c4043"></div>
<svg style="left:801px;top:670px" width="8" height="20"><circle cx="4" cy="4" r="2.2" fill="#fff"/><circle cx="4" cy="10" r="2.2" fill="#fff"/><circle cx="4" cy="16" r="2.2" fill="#fff"/></svg>
<div class="a" style="left:837px;top:660px;width:56px;height:40px;border-radius:20px;background:#ea4335"></div>
<svg style="left:853px;top:673px" width="24" height="14" viewBox="0 0 24 14"><path d="M1,7.5 Q12,-1 23,7.5 L21,11 Q19.5,12 18,11 L15.5,9.2 L15.5,6 Q12,4.8 8.5,6 L8.5,9.2 L6,11 Q4.5,12 3,11 Z" fill="#fff"/></svg>
<svg style="left:1175px;top:669px" width="22" height="22"><circle cx="11" cy="11" r="9.3" stroke="#fff" stroke-width="2" fill="none"/><circle cx="11" cy="6.8" r="1.4" fill="#fff"/><rect x="9.8" y="9.3" width="2.4" height="6.5" fill="#fff"/></svg>
<svg style="left:1222px;top:672px" width="25" height="17" viewBox="0 0 25 17"><circle cx="9" cy="4.5" r="3.4" stroke="#fff" stroke-width="2" fill="none"/><path d="M14.5,1.2 Q18.5,1.5 18.5,4.5 Q18.5,7.5 14.5,7.8 Q16,6 16,4.5 Q16,3 14.5,1.2 Z" fill="#fff"/><path d="M1,16 L1,14 Q1,10 9,10 Q17,10 17,14 L17,16 Z" stroke="#fff" stroke-width="2" fill="none" stroke-linejoin="round"/><path d="M18,10.5 Q24,11 24,14 L24,16 L19.5,16 L19.5,14 Q19.5,12 18,10.5 Z" fill="#fff"/></svg>
<div class="a" style="left:1235px;top:647px;width:29px;height:20px;border-radius:10px;background:#5f6368"></div>
<div class="t" style="left:1242.00px;top:651.80px;font-size:12px;font-weight:bold;font-family:'Liberation Sans', sans-serif;line-height:12px;color:#fff;letter-spacing:1.641px;">45</div>
<svg style="left:1271px;top:669px" width="23" height="22" viewBox="0 0 23 22"><path d="M1.5,1.5 L20.5,1.5 L20.5,15 L5,15 L1.5,19 Z" stroke="#fff" stroke-width="2" fill="none" stroke-linejoin="miter"/><rect x="5" y="5" width="12" height="1.8" fill="#fff"/><rect x="5" y="8.2" width="12" height="1.8" fill="#fff"/><rect x="5" y="11.3" width="8" height="1.8" fill="#fff"/></svg>
<div class="a" style="left:1286px;top:661px;width:9px;height:9px;border-radius:50%;background:#8ab4f8;box-shadow:0 0 0 1.5px #202124"></div>
<svg style="left:1320px;top:670px" width="22" height="20" viewBox="0 0 22 20"><path d="M11,1.5 L15.5,8 L6.5,8 Z" stroke="#fff" stroke-width="2" fill="none" stroke-linejoin="miter"/><rect x="1.5" y="11" width="7.5" height="7.5" stroke="#fff" stroke-width="2" fill="none"/><circle cx="16.3" cy="14.8" r="3.8" stroke="#fff" stroke-width="2" fill="none"/></svg>
<div class="a" style="left:0;top:720px;width:1366px;height:48px;background:#d3e6f2"></div>
<div class="a" style="left:0;top:720px;width:1366px;height:1px;background:#cfdde6"></div>
<div class="a" style="left:21px;top:733px;width:21px;height:21px;border-radius:50%;background:linear-gradient(150deg,#f3b21a 10%,#f07a10 90%);box-shadow:0 0 0 1px rgba(255,230,180,0.8)"></div>
<div class="t" style="left:50.50px;top:730.65px;font-size:11px;font-weight:normal;font-family:'Liberation Sans', sans-serif;line-height:11px;color:#1a1a1a;letter-spacing:-0.526px;">15°C</div>
<div class="t" style="left:50.50px;top:745.80px;font-size:12px;font-weight:normal;font-family:'Liberation Sans', sans-serif;line-height:12px;color:#4a4a4a;letter-spacing:-0.191px;">Ensolarado</div>
<svg style="left:428px;top:733px" width="23" height="23" viewBox="0 0 23 23"><defs><linearGradient id="wl" x1="0" y1="0" x2="1" y2="1"><stop offset="0" stop-color="#52c0f5"/><stop offset="1" stop-color="#0f6cc8"/></linearGradient></defs>
<rect x="0" y="0" width="10.8" height="10.8" rx="1" fill="url(#wl)"/><rect x="12.2" y="0" width="10.8" height="10.8" rx="1" fill="url(#wl)"/><rect x="0" y="12.2" width="10.8" height="10.8" rx="1" fill="url(#wl)"/><rect x="12.2" y="12.2" width="10.8" height="10.8" rx="1" fill="url(#wl)"/></svg>
<div class="a" style="left:465px;top:729px;width:218px;height:30px;border-radius:15px;background:#f2f6f9;border:1px solid #cfd9e0"></div>
<svg style="left:475px;top:737px" width="15" height="15"><circle cx="6" cy="6" r="5" stroke="#1a1a1a" stroke-width="1.6" fill="none"/><path d="M9.7,9.7 L14,14" stroke="#1a1a1a" stroke-width="1.8"/></svg>
<div class="t" style="left:501.30px;top:737.10px;font-size:14px;font-weight:normal;font-family:'Liberation Sans', sans-serif;line-height:14px;color:#5a5a5a;letter-spacing:-0.658px;">Pesquisar</div>
<svg style="left:657px;top:733px" width="22" height="22" viewBox="0 0 22 22"><defs><linearGradient id="bg1" x1="0" y1="0" x2="1" y2="1"><stop offset="0" stop-color="#3ab0f0"/><stop offset="1" stop-color="#2860d0"/></linearGradient></defs><path d="M11,1.5 A9.5,9.5 0 1 1 4.5,18 L2,20.5 L2.5,15.5 A9.5,9.5 0 0 1 11,1.5 Z" stroke="url(#bg1)" stroke-width="1.6" fill="#fff"/><path d="M8,5 L8,15 L12.5,17 L15,14 Q15,11 11,10.5 L10,10.5 L10,6 Z" fill="url(#bg1)"/></svg>
<svg style="left:696px;top:733px" width="24" height="22"><rect x="8" y="0" width="16" height="15" fill="#f4f4f4" stroke="#cfcfcf" stroke-width="0.8"/><rect x="0" y="7" width="17" height="15" fill="#1e1e1e"/><rect x="8" y="7" width="9" height="8" fill="#b0b0b0"/></svg>
<svg style="left:740px;top:733px" width="24" height="22" viewBox="0 0 24 22"><defs><linearGradient id="tm" x1="0" y1="0" x2="1" y2="1"><stop offset="0" stop-color="#7b83eb"/><stop offset="1" stop-color="#5b4fc0"/></linearGradient></defs><path d="M12,0.5 A11,10.5 0 1 1 5,19 L1,21.5 L2.5,16 A11,10.5 0 0 1 12,0.5 Z" fill="url(#tm)"/><rect x="6" y="7" width="8" height="7.5" rx="1.2" fill="#fff"/><path d="M14.5,9 L18,7 L18,14.5 L14.5,12.5 Z" fill="#fff"/></svg>
<svg style="left:784px;top:733px" width="24" height="23" viewBox="0 0 24 23"><defs><linearGradient id="ed1" x1="0" y1="0" x2="1" y2="1"><stop offset="0" stop-color="#36c3a0"/><stop offset="0.5" stop-color="#1e9be0"/><stop offset="1" stop-color="#0c59a4"/></linearGradient></defs><circle cx="12" cy="11.5" r="11.5" fill="url(#ed1)"/><path d="M23,14 Q21,9 15,9 Q10,9 9.5,13 Q9.5,17 14,18 Q10,21 6,20 Q1,17 1.5,11 Q2,19 11,21 Q18,22 23,14 Z" fill="#0b4f98"/><ellipse cx="15" cy="13.5" rx="4" ry="3" fill="#d3e6f2"/><path d="M23,12 Q22,5 14,4 Q20,7 22,12 Z" fill="#6fe05a" opacity="0.7"/></svg>
<svg style="left:828px;top:733px" width="24" height="22" viewBox="0 0 24 22"><path d="M0,2 Q0,0 2,0 L8,0 L10,2.5 L22,2.5 Q24,2.5 24,4.5 L24,20 Q24,22 22,22 L2,22 Q0,22 0,20 Z" fill="#e8b400"/><path d="M0,5 L24,5 L24,20 Q24,22 22,22 L2,22 Q0,22 0,20 Z" fill="#fcd75a"/><rect x="5" y="15" width="14" height="7" rx="1" fill="#1a78d0"/></svg>
<svg style="left:872px;top:733px" width="24" height="22" viewBox="0 0 24 22"><path d="M0,8 L12,0 L24,8 Z" fill="#0b5cab"/><rect x="0" y="8" width="24" height="14" fill="#28a8ea"/><path d="M0,8 L12,15 L24,8" fill="#e8f4fc"/><path d="M0,22 L10,14 L14,14 L24,22 Z" fill="#1490df"/></svg>
<div class="a" style="left:909px;top:725px;width:38px;height:38px;border-radius:5px;background:#eef4f8;border:1px solid #dfe8ee"></div>
<svg style="left:916px;top:732px" width="24" height="24" viewBox="0 0 48 48"><circle cx="24" cy="24" r="22" fill="#db4437"/><path d="M24,24 L43.05,13 A22,22 0 0 1 24,46 Z" fill="#fbc02d"/><path d="M24,24 L24,46 A22,22 0 0 1 4.95,13 Z" fill="#0f9d58"/><path d="M24,24 L4.95,13 A22,22 0 0 1 43.05,13 Z" fill="#db4437"/><path d="M24,14 L43.05,13 L33.5,29.5 Z" fill="#fbc02d"/><path d="M33.5,29.5 L24,46 L14.5,29.5 Z" fill="#fbc02d" opacity="0"/><circle cx="24" cy="24" r="10" fill="#fff"/><circle cx="24" cy="24" r="7.8" fill="#1a73e8"/></svg>
<div class="a" style="left:920px;top:760px;width:16px;height:3px;border-radius:2px;background:#0067c0"></div>
<svg style="left:1086px;top:740px" width="12" height="7"><path d="M0.8,6.2 L6,1 L11.2,6.2" stroke="#1a1a1a" stroke-width="1.3" fill="none"/></svg>
<svg style="left:1115px;top:735px" width="18" height="18" viewBox="0 0 18 18"><path d="M2,9 A6.5,6.5 0 0 1 14,5" stroke="#1a1a1a" stroke-width="1.3" fill="none"/><path d="M15,1.5 L15,5.5 L11,5.5" stroke="#1a1a1a" stroke-width="1.3" fill="none"/><path d="M2.5,12.5 L2.5,16 L6,16" stroke="#1a1a1a" stroke-width="1.3" fill="none"/><path d="M2.5,16 L5,13" stroke="#1a1a1a" stroke-width="1.2"/><circle cx="13" cy="13" r="4.2" fill="#f7a21b"/></svg>
<svg style="left:1150px;top:735px" width="13" height="17"><rect x="3.5" y="0.8" width="6" height="10" rx="3" stroke="#2a64c0" stroke-width="1.4" fill="none"/><path d="M1,7.5 Q1,13 6.5,13 Q12,13 12,7.5 M6.5,13 L6.5,16.5" stroke="#2a64c0" stroke-width="1.4" fill="none"/></svg>
<svg style="left:1180px;top:737px" width="17" height="13" viewBox="0 0 17 13"><path d="M1,4.5 Q8.5,-2.5 16,4.5" stroke="#1a1a1a" stroke-width="1.3" fill="none"/><path d="M3.5,7 Q8.5,2.5 13.5,7" stroke="#1a1a1a" stroke-width="1.3" fill="none"/><path d="M6,9.5 Q8.5,7.5 11,9.5" stroke="#1a1a1a" stroke-width="1.3" fill="none"/><circle cx="8.5" cy="12" r="1.2" fill="#1a1a1a"/></svg>
<svg style="left:1203px;top:736px" width="17" height="15" viewBox="0 0 17 15"><path d="M1,5 L4,5 L8,1.5 L8,13.5 L4,10 L1,10 Z" stroke="#1a1a1a" stroke-width="1.2" fill="none" stroke-linejoin="round"/><path d="M10.5,5 Q12,7.5 10.5,10 M12.5,3 Q15,7.5 12.5,12" stroke="#1a1a1a" stroke-width="1.2" fill="none"/><path d="M14.5,1.5 Q17.5,7.5 14.5,13.5" stroke="#999" stroke-width="1" fill="none"/></svg>
<svg style="left:1227px;top:736px" width="18" height="15" viewBox="0 0 18 15"><rect x="1" y="4" width="13" height="9" rx="1.5" stroke="#1a1a1a" stroke-width="1.4" fill="none"/><rect x="14" y="6.5" width="2.5" height="4" fill="#1a1a1a"/><path d="M3,5 L12,5 L12,12 L3,12 Z" fill="#1a1a1a"/><path d="M5,0 L3,5 L6,5 L4.5,8" stroke="#d3e6f2" stroke-width="1.6" fill="none"/><path d="M5,0 L3,5 L6,5 L4.5,8" stroke="#1a1a1a" stroke-width="0.9" fill="none"/></svg>
<div class="t" style="left:1294.20px;top:730.65px;font-size:11px;font-weight:normal;font-family:'Liberation Sans', sans-serif;line-height:11px;color:#1a1a1a;letter-spacing:0.217px;">09:17</div>
<div class="t" style="left:1261.60px;top:746.65px;font-size:11px;font-weight:normal;font-family:'Liberation Sans', sans-serif;line-height:11px;color:#1a1a1a;letter-spacing:0.660px;">15/08/2023</div>
<div class="a" style="left:1330px;top:736px;width:16px;height:16px;border-radius:50%;background:#0a66b8"></div>
<div class="t" style="left:1334.50px;top:739.15px;font-size:11px;font-weight:bold;font-family:'Liberation Sans', sans-serif;line-height:11px;color:#fff;">2</div>
</body></html>
